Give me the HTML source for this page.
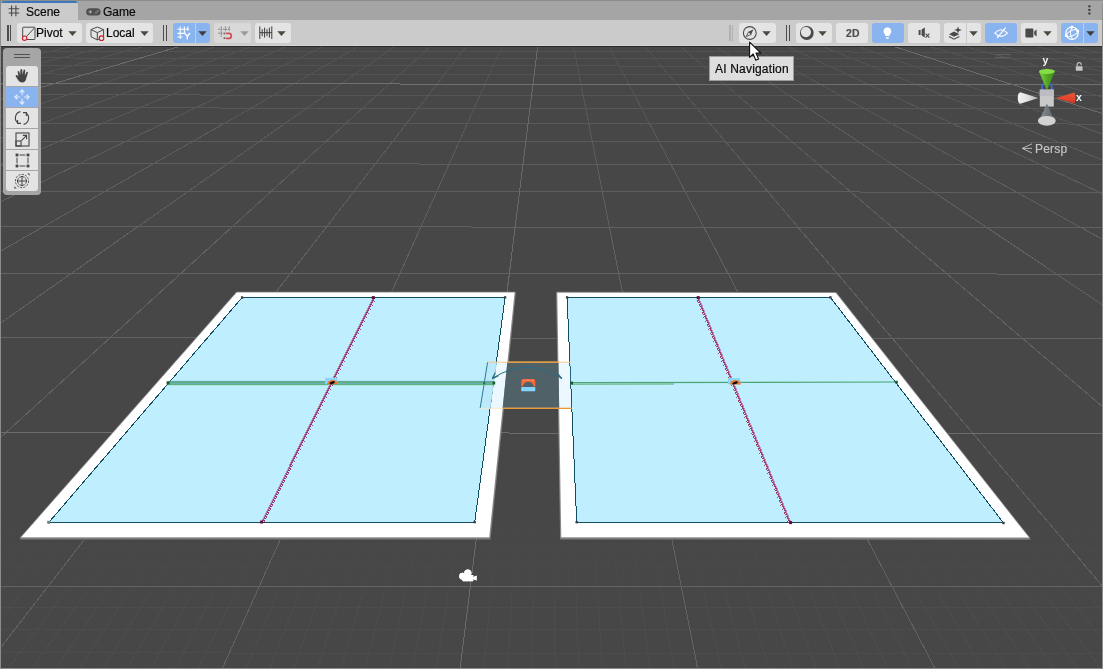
<!DOCTYPE html>
<html><head><meta charset="utf-8"><title>Scene</title>
<style>
html,body{margin:0;padding:0;}
body{width:1103px;height:669px;overflow:hidden;background:#474747;position:relative;font-family:"Liberation Sans",sans-serif;font-size:12px;color:#090909;-webkit-text-stroke-width:0.2px;}
#scene{position:absolute;left:0;top:0;}
#tabbar{position:absolute;left:0;top:0;width:1103px;height:20px;background:#a5a5a5;}
#tabbar .top{position:absolute;left:0;top:0;width:1103px;height:1px;background:#8d8d8d;}
#scenetab{position:absolute;left:1px;top:1px;width:77px;height:19px;background:#cbcbcb;border-radius:3px 3px 0 0;overflow:hidden;}
#scenetab .bl{position:absolute;left:0;top:0;width:100%;height:2px;background:#3a79bb;}
.tabtxt{will-change:transform;position:absolute;top:5px;line-height:14px;font-size:12px;}
#toolbar{position:absolute;left:0;top:20px;width:1103px;height:26px;background:#cbcbcb;box-shadow:inset 0 -1px 0 #d4d4d4;}
#tbline{position:absolute;left:0;top:46px;width:1103px;height:1px;background:#2b2b2b;}
.btn{position:absolute;top:3px;height:20px;background:#e4e4e4;border-radius:3px;}
.btn.blue{background:#8ab4f0;}
.btn.dis{background:#d9d9d9;}
.btn.l{border-radius:3px 0 0 3px;}
.btn.r{border-radius:0 3px 3px 0;}
.btn .t{will-change:transform;position:absolute;top:3px;line-height:14px;font-size:12px;}
.hd{position:absolute;top:5px;width:1.4px;height:15.5px;background:#4c4c4c;}
.hd.lt{background:#b0b0b0;}
#lb{position:absolute;left:0;top:0;width:1px;height:669px;background:#8d8d8d;}
#rb{position:absolute;left:1102px;top:3px;width:1px;height:666px;background:#8d8d8d;}
#bb{position:absolute;left:0;top:667.7px;width:1103px;height:1.3px;background:#8d8d8d;}
#tools{position:absolute;left:3px;top:48px;width:38px;height:146.5px;background:#a6a6a6;border-radius:4px;}
.tb{position:absolute;left:3px;width:32px;height:20px;background:#e4e4e4;}
#tip{position:absolute;left:709px;top:56px;width:83px;height:23px;background:#dedede;border:1px solid #9c9c9c;}
#tip span{position:absolute;left:4.6px;top:5.4px;will-change:transform;font-size:12px;line-height:14px;letter-spacing:0.19px;white-space:nowrap;color:#0a0a0a;}
#persp{will-change:transform;position:absolute;left:1035.4px;top:141.6px;font-size:12px;line-height:14px;color:#c4c4c4;letter-spacing:0.2px;}
svg{display:block;}
.abs{position:absolute;}
</style></head><body>
<svg id="scene" width="1103" height="669" viewBox="0 0 1103 669">
<g shape-rendering="crispEdges" stroke-width="1"><line x1="0" y1="678.2" x2="1103" y2="678.7" stroke="#fff" stroke-opacity="0.027"/><line x1="0" y1="652.9" x2="1103" y2="653.4" stroke="#fff" stroke-opacity="0.027"/><line x1="0" y1="629.3" x2="1103" y2="629.8" stroke="#fff" stroke-opacity="0.027"/><line x1="0" y1="607.1" x2="1103" y2="607.7" stroke="#fff" stroke-opacity="0.026"/><line x1="0" y1="566.8" x2="1103" y2="567.4" stroke="#fff" stroke-opacity="0.016"/><line x1="0" y1="548.5" x2="1103" y2="549.1" stroke="#fff" stroke-opacity="0.011"/><line x1="0" y1="531.1" x2="1103" y2="531.7" stroke="#fff" stroke-opacity="0.007"/><line x1="0" y1="514.7" x2="1103" y2="515.4" stroke="#fff" stroke-opacity="0.003"/><line x1="-1170.4" y1="506.2" x2="-1296.0" y2="547.8" stroke="#fff" stroke-opacity="0.008"/><line x1="-1296.0" y1="547.8" x2="-1441.3" y2="595.9" stroke="#fff" stroke-opacity="0.017"/><line x1="-1441.3" y1="595.9" x2="-2056.8" y2="799.5" stroke="#fff" stroke-opacity="0.026"/><line x1="-1151.9" y1="506.2" x2="-1276.1" y2="547.8" stroke="#fff" stroke-opacity="0.008"/><line x1="-1276.1" y1="547.8" x2="-1419.8" y2="595.9" stroke="#fff" stroke-opacity="0.017"/><line x1="-1419.8" y1="595.9" x2="-2028.6" y2="799.5" stroke="#fff" stroke-opacity="0.026"/><line x1="-1133.3" y1="506.2" x2="-1256.1" y2="547.8" stroke="#fff" stroke-opacity="0.008"/><line x1="-1256.1" y1="547.8" x2="-1398.3" y2="595.9" stroke="#fff" stroke-opacity="0.017"/><line x1="-1398.3" y1="595.9" x2="-2000.5" y2="799.5" stroke="#fff" stroke-opacity="0.026"/><line x1="-1114.7" y1="506.3" x2="-1236.2" y2="547.8" stroke="#fff" stroke-opacity="0.008"/><line x1="-1236.2" y1="547.8" x2="-1376.8" y2="595.9" stroke="#fff" stroke-opacity="0.017"/><line x1="-1376.8" y1="595.9" x2="-1972.3" y2="799.5" stroke="#fff" stroke-opacity="0.026"/><line x1="-1096.2" y1="506.3" x2="-1216.3" y2="547.8" stroke="#fff" stroke-opacity="0.008"/><line x1="-1216.3" y1="547.8" x2="-1355.3" y2="595.9" stroke="#fff" stroke-opacity="0.017"/><line x1="-1355.3" y1="595.9" x2="-1944.2" y2="799.5" stroke="#fff" stroke-opacity="0.026"/><line x1="-1077.6" y1="506.3" x2="-1196.4" y2="547.8" stroke="#fff" stroke-opacity="0.008"/><line x1="-1196.4" y1="547.8" x2="-1333.8" y2="595.9" stroke="#fff" stroke-opacity="0.017"/><line x1="-1333.8" y1="595.9" x2="-1916.1" y2="799.6" stroke="#fff" stroke-opacity="0.026"/><line x1="-1059.0" y1="506.3" x2="-1176.5" y2="547.8" stroke="#fff" stroke-opacity="0.008"/><line x1="-1176.5" y1="547.8" x2="-1312.4" y2="595.9" stroke="#fff" stroke-opacity="0.017"/><line x1="-1312.4" y1="595.9" x2="-1887.9" y2="799.6" stroke="#fff" stroke-opacity="0.026"/><line x1="-1040.5" y1="506.3" x2="-1156.5" y2="547.8" stroke="#fff" stroke-opacity="0.008"/><line x1="-1156.5" y1="547.8" x2="-1290.9" y2="595.9" stroke="#fff" stroke-opacity="0.017"/><line x1="-1290.9" y1="595.9" x2="-1859.8" y2="799.6" stroke="#fff" stroke-opacity="0.026"/><line x1="-1021.9" y1="506.3" x2="-1136.6" y2="547.9" stroke="#fff" stroke-opacity="0.008"/><line x1="-1136.6" y1="547.9" x2="-1269.4" y2="595.9" stroke="#fff" stroke-opacity="0.017"/><line x1="-1269.4" y1="595.9" x2="-1831.7" y2="799.6" stroke="#fff" stroke-opacity="0.026"/><line x1="-984.8" y1="506.3" x2="-1096.8" y2="547.9" stroke="#fff" stroke-opacity="0.008"/><line x1="-1096.8" y1="547.9" x2="-1226.4" y2="596.0" stroke="#fff" stroke-opacity="0.017"/><line x1="-1226.4" y1="596.0" x2="-1775.4" y2="799.6" stroke="#fff" stroke-opacity="0.026"/><line x1="-966.2" y1="506.3" x2="-1076.9" y2="547.9" stroke="#fff" stroke-opacity="0.008"/><line x1="-1076.9" y1="547.9" x2="-1204.9" y2="596.0" stroke="#fff" stroke-opacity="0.017"/><line x1="-1204.9" y1="596.0" x2="-1747.3" y2="799.6" stroke="#fff" stroke-opacity="0.026"/><line x1="-947.6" y1="506.3" x2="-1056.9" y2="547.9" stroke="#fff" stroke-opacity="0.008"/><line x1="-1056.9" y1="547.9" x2="-1183.4" y2="596.0" stroke="#fff" stroke-opacity="0.017"/><line x1="-1183.4" y1="596.0" x2="-1719.1" y2="799.6" stroke="#fff" stroke-opacity="0.026"/><line x1="-929.1" y1="506.4" x2="-1037.0" y2="547.9" stroke="#fff" stroke-opacity="0.008"/><line x1="-1037.0" y1="547.9" x2="-1162.0" y2="596.0" stroke="#fff" stroke-opacity="0.017"/><line x1="-1162.0" y1="596.0" x2="-1691.0" y2="799.6" stroke="#fff" stroke-opacity="0.026"/><line x1="-910.5" y1="506.4" x2="-1017.1" y2="547.9" stroke="#fff" stroke-opacity="0.008"/><line x1="-1017.1" y1="547.9" x2="-1140.5" y2="596.0" stroke="#fff" stroke-opacity="0.017"/><line x1="-1140.5" y1="596.0" x2="-1662.9" y2="799.6" stroke="#fff" stroke-opacity="0.026"/><line x1="-892.0" y1="506.4" x2="-997.2" y2="547.9" stroke="#fff" stroke-opacity="0.008"/><line x1="-997.2" y1="547.9" x2="-1119.0" y2="596.0" stroke="#fff" stroke-opacity="0.017"/><line x1="-1119.0" y1="596.0" x2="-1634.8" y2="799.7" stroke="#fff" stroke-opacity="0.026"/><line x1="-873.4" y1="506.4" x2="-977.3" y2="547.9" stroke="#fff" stroke-opacity="0.008"/><line x1="-977.3" y1="547.9" x2="-1097.5" y2="596.0" stroke="#fff" stroke-opacity="0.017"/><line x1="-1097.5" y1="596.0" x2="-1606.6" y2="799.7" stroke="#fff" stroke-opacity="0.026"/><line x1="-854.8" y1="506.4" x2="-957.4" y2="547.9" stroke="#fff" stroke-opacity="0.008"/><line x1="-957.4" y1="547.9" x2="-1076.0" y2="596.0" stroke="#fff" stroke-opacity="0.017"/><line x1="-1076.0" y1="596.0" x2="-1578.5" y2="799.7" stroke="#fff" stroke-opacity="0.026"/><line x1="-836.3" y1="506.4" x2="-937.5" y2="548.0" stroke="#fff" stroke-opacity="0.008"/><line x1="-937.5" y1="548.0" x2="-1054.5" y2="596.0" stroke="#fff" stroke-opacity="0.017"/><line x1="-1054.5" y1="596.0" x2="-1550.4" y2="799.7" stroke="#fff" stroke-opacity="0.026"/><line x1="-799.2" y1="506.4" x2="-897.6" y2="548.0" stroke="#fff" stroke-opacity="0.008"/><line x1="-897.6" y1="548.0" x2="-1011.6" y2="596.1" stroke="#fff" stroke-opacity="0.017"/><line x1="-1011.6" y1="596.1" x2="-1494.1" y2="799.7" stroke="#fff" stroke-opacity="0.026"/><line x1="-780.6" y1="506.4" x2="-877.7" y2="548.0" stroke="#fff" stroke-opacity="0.008"/><line x1="-877.7" y1="548.0" x2="-990.1" y2="596.1" stroke="#fff" stroke-opacity="0.017"/><line x1="-990.1" y1="596.1" x2="-1466.0" y2="799.7" stroke="#fff" stroke-opacity="0.026"/><line x1="-762.1" y1="506.5" x2="-857.8" y2="548.0" stroke="#fff" stroke-opacity="0.008"/><line x1="-857.8" y1="548.0" x2="-968.6" y2="596.1" stroke="#fff" stroke-opacity="0.017"/><line x1="-968.6" y1="596.1" x2="-1437.9" y2="799.7" stroke="#fff" stroke-opacity="0.026"/><line x1="-743.5" y1="506.5" x2="-837.9" y2="548.0" stroke="#fff" stroke-opacity="0.008"/><line x1="-837.9" y1="548.0" x2="-947.1" y2="596.1" stroke="#fff" stroke-opacity="0.017"/><line x1="-947.1" y1="596.1" x2="-1409.8" y2="799.7" stroke="#fff" stroke-opacity="0.026"/><line x1="-724.9" y1="506.5" x2="-818.0" y2="548.0" stroke="#fff" stroke-opacity="0.008"/><line x1="-818.0" y1="548.0" x2="-925.7" y2="596.1" stroke="#fff" stroke-opacity="0.017"/><line x1="-925.7" y1="596.1" x2="-1381.7" y2="799.8" stroke="#fff" stroke-opacity="0.026"/><line x1="-706.4" y1="506.5" x2="-798.1" y2="548.0" stroke="#fff" stroke-opacity="0.008"/><line x1="-798.1" y1="548.0" x2="-904.2" y2="596.1" stroke="#fff" stroke-opacity="0.017"/><line x1="-904.2" y1="596.1" x2="-1353.5" y2="799.8" stroke="#fff" stroke-opacity="0.026"/><line x1="-687.8" y1="506.5" x2="-778.2" y2="548.0" stroke="#fff" stroke-opacity="0.008"/><line x1="-778.2" y1="548.0" x2="-882.7" y2="596.1" stroke="#fff" stroke-opacity="0.017"/><line x1="-882.7" y1="596.1" x2="-1325.4" y2="799.8" stroke="#fff" stroke-opacity="0.026"/><line x1="-669.3" y1="506.5" x2="-758.3" y2="548.1" stroke="#fff" stroke-opacity="0.008"/><line x1="-758.3" y1="548.1" x2="-861.2" y2="596.1" stroke="#fff" stroke-opacity="0.017"/><line x1="-861.2" y1="596.1" x2="-1297.3" y2="799.8" stroke="#fff" stroke-opacity="0.026"/><line x1="-650.7" y1="506.5" x2="-738.3" y2="548.1" stroke="#fff" stroke-opacity="0.008"/><line x1="-738.3" y1="548.1" x2="-839.8" y2="596.2" stroke="#fff" stroke-opacity="0.017"/><line x1="-839.8" y1="596.2" x2="-1269.2" y2="799.8" stroke="#fff" stroke-opacity="0.026"/><line x1="-613.6" y1="506.5" x2="-698.5" y2="548.1" stroke="#fff" stroke-opacity="0.008"/><line x1="-698.5" y1="548.1" x2="-796.8" y2="596.2" stroke="#fff" stroke-opacity="0.017"/><line x1="-796.8" y1="596.2" x2="-1213.0" y2="799.8" stroke="#fff" stroke-opacity="0.026"/><line x1="-595.1" y1="506.5" x2="-678.6" y2="548.1" stroke="#fff" stroke-opacity="0.008"/><line x1="-678.6" y1="548.1" x2="-775.3" y2="596.2" stroke="#fff" stroke-opacity="0.017"/><line x1="-775.3" y1="596.2" x2="-1184.9" y2="799.8" stroke="#fff" stroke-opacity="0.026"/><line x1="-576.5" y1="506.6" x2="-658.7" y2="548.1" stroke="#fff" stroke-opacity="0.008"/><line x1="-658.7" y1="548.1" x2="-753.9" y2="596.2" stroke="#fff" stroke-opacity="0.017"/><line x1="-753.9" y1="596.2" x2="-1156.8" y2="799.8" stroke="#fff" stroke-opacity="0.026"/><line x1="-558.0" y1="506.6" x2="-638.8" y2="548.1" stroke="#fff" stroke-opacity="0.008"/><line x1="-638.8" y1="548.1" x2="-732.4" y2="596.2" stroke="#fff" stroke-opacity="0.017"/><line x1="-732.4" y1="596.2" x2="-1128.7" y2="799.8" stroke="#fff" stroke-opacity="0.026"/><line x1="-539.4" y1="506.6" x2="-618.9" y2="548.1" stroke="#fff" stroke-opacity="0.008"/><line x1="-618.9" y1="548.1" x2="-710.9" y2="596.2" stroke="#fff" stroke-opacity="0.017"/><line x1="-710.9" y1="596.2" x2="-1100.6" y2="799.9" stroke="#fff" stroke-opacity="0.026"/><line x1="-520.8" y1="506.6" x2="-599.0" y2="548.1" stroke="#fff" stroke-opacity="0.008"/><line x1="-599.0" y1="548.1" x2="-689.5" y2="596.2" stroke="#fff" stroke-opacity="0.017"/><line x1="-689.5" y1="596.2" x2="-1072.4" y2="799.9" stroke="#fff" stroke-opacity="0.026"/><line x1="-502.3" y1="506.6" x2="-579.1" y2="548.2" stroke="#fff" stroke-opacity="0.008"/><line x1="-579.1" y1="548.2" x2="-668.0" y2="596.2" stroke="#fff" stroke-opacity="0.017"/><line x1="-668.0" y1="596.2" x2="-1044.3" y2="799.9" stroke="#fff" stroke-opacity="0.026"/><line x1="-483.7" y1="506.6" x2="-559.2" y2="548.2" stroke="#fff" stroke-opacity="0.008"/><line x1="-559.2" y1="548.2" x2="-646.5" y2="596.3" stroke="#fff" stroke-opacity="0.017"/><line x1="-646.5" y1="596.3" x2="-1016.2" y2="799.9" stroke="#fff" stroke-opacity="0.026"/><line x1="-465.2" y1="506.6" x2="-539.3" y2="548.2" stroke="#fff" stroke-opacity="0.008"/><line x1="-539.3" y1="548.2" x2="-625.0" y2="596.3" stroke="#fff" stroke-opacity="0.017"/><line x1="-625.0" y1="596.3" x2="-988.1" y2="799.9" stroke="#fff" stroke-opacity="0.026"/><line x1="-428.1" y1="506.6" x2="-499.5" y2="548.2" stroke="#fff" stroke-opacity="0.008"/><line x1="-499.5" y1="548.2" x2="-582.1" y2="596.3" stroke="#fff" stroke-opacity="0.017"/><line x1="-582.1" y1="596.3" x2="-931.9" y2="799.9" stroke="#fff" stroke-opacity="0.026"/><line x1="-409.6" y1="506.7" x2="-479.6" y2="548.2" stroke="#fff" stroke-opacity="0.008"/><line x1="-479.6" y1="548.2" x2="-560.6" y2="596.3" stroke="#fff" stroke-opacity="0.017"/><line x1="-560.6" y1="596.3" x2="-903.8" y2="799.9" stroke="#fff" stroke-opacity="0.026"/><line x1="-391.0" y1="506.7" x2="-459.7" y2="548.2" stroke="#fff" stroke-opacity="0.008"/><line x1="-459.7" y1="548.2" x2="-539.2" y2="596.3" stroke="#fff" stroke-opacity="0.017"/><line x1="-539.2" y1="596.3" x2="-875.7" y2="799.9" stroke="#fff" stroke-opacity="0.026"/><line x1="-372.5" y1="506.7" x2="-439.8" y2="548.2" stroke="#fff" stroke-opacity="0.008"/><line x1="-439.8" y1="548.2" x2="-517.7" y2="596.3" stroke="#fff" stroke-opacity="0.017"/><line x1="-517.7" y1="596.3" x2="-847.7" y2="799.9" stroke="#fff" stroke-opacity="0.026"/><line x1="-353.9" y1="506.7" x2="-419.9" y2="548.2" stroke="#fff" stroke-opacity="0.008"/><line x1="-419.9" y1="548.2" x2="-496.2" y2="596.3" stroke="#fff" stroke-opacity="0.017"/><line x1="-496.2" y1="596.3" x2="-819.6" y2="800.0" stroke="#fff" stroke-opacity="0.026"/><line x1="-335.4" y1="506.7" x2="-400.0" y2="548.2" stroke="#fff" stroke-opacity="0.008"/><line x1="-400.0" y1="548.2" x2="-474.8" y2="596.3" stroke="#fff" stroke-opacity="0.017"/><line x1="-474.8" y1="596.3" x2="-791.5" y2="800.0" stroke="#fff" stroke-opacity="0.026"/><line x1="-316.8" y1="506.7" x2="-380.1" y2="548.3" stroke="#fff" stroke-opacity="0.008"/><line x1="-380.1" y1="548.3" x2="-453.3" y2="596.4" stroke="#fff" stroke-opacity="0.017"/><line x1="-453.3" y1="596.4" x2="-763.4" y2="800.0" stroke="#fff" stroke-opacity="0.026"/><line x1="-298.3" y1="506.7" x2="-360.2" y2="548.3" stroke="#fff" stroke-opacity="0.008"/><line x1="-360.2" y1="548.3" x2="-431.9" y2="596.4" stroke="#fff" stroke-opacity="0.017"/><line x1="-431.9" y1="596.4" x2="-735.3" y2="800.0" stroke="#fff" stroke-opacity="0.026"/><line x1="-279.7" y1="506.7" x2="-340.3" y2="548.3" stroke="#fff" stroke-opacity="0.008"/><line x1="-340.3" y1="548.3" x2="-410.4" y2="596.4" stroke="#fff" stroke-opacity="0.017"/><line x1="-410.4" y1="596.4" x2="-707.2" y2="800.0" stroke="#fff" stroke-opacity="0.026"/><line x1="-242.6" y1="506.7" x2="-300.5" y2="548.3" stroke="#fff" stroke-opacity="0.008"/><line x1="-300.5" y1="548.3" x2="-367.5" y2="596.4" stroke="#fff" stroke-opacity="0.017"/><line x1="-367.5" y1="596.4" x2="-651.0" y2="800.0" stroke="#fff" stroke-opacity="0.026"/><line x1="-224.1" y1="506.8" x2="-280.6" y2="548.3" stroke="#fff" stroke-opacity="0.008"/><line x1="-280.6" y1="548.3" x2="-346.0" y2="596.4" stroke="#fff" stroke-opacity="0.017"/><line x1="-346.0" y1="596.4" x2="-622.9" y2="800.0" stroke="#fff" stroke-opacity="0.026"/><line x1="-205.6" y1="506.8" x2="-260.7" y2="548.3" stroke="#fff" stroke-opacity="0.008"/><line x1="-260.7" y1="548.3" x2="-324.6" y2="596.4" stroke="#fff" stroke-opacity="0.017"/><line x1="-324.6" y1="596.4" x2="-594.8" y2="800.0" stroke="#fff" stroke-opacity="0.026"/><line x1="-187.0" y1="506.8" x2="-240.8" y2="548.3" stroke="#fff" stroke-opacity="0.008"/><line x1="-240.8" y1="548.3" x2="-303.1" y2="596.4" stroke="#fff" stroke-opacity="0.017"/><line x1="-303.1" y1="596.4" x2="-566.7" y2="800.0" stroke="#fff" stroke-opacity="0.026"/><line x1="-168.5" y1="506.8" x2="-220.9" y2="548.3" stroke="#fff" stroke-opacity="0.008"/><line x1="-220.9" y1="548.3" x2="-281.6" y2="596.4" stroke="#fff" stroke-opacity="0.017"/><line x1="-281.6" y1="596.4" x2="-538.7" y2="800.1" stroke="#fff" stroke-opacity="0.026"/><line x1="-149.9" y1="506.8" x2="-201.0" y2="548.4" stroke="#fff" stroke-opacity="0.008"/><line x1="-201.0" y1="548.4" x2="-260.2" y2="596.4" stroke="#fff" stroke-opacity="0.017"/><line x1="-260.2" y1="596.4" x2="-510.6" y2="800.1" stroke="#fff" stroke-opacity="0.026"/><line x1="-131.4" y1="506.8" x2="-181.1" y2="548.4" stroke="#fff" stroke-opacity="0.008"/><line x1="-181.1" y1="548.4" x2="-238.7" y2="596.5" stroke="#fff" stroke-opacity="0.017"/><line x1="-238.7" y1="596.5" x2="-482.5" y2="800.1" stroke="#fff" stroke-opacity="0.026"/><line x1="-112.8" y1="506.8" x2="-161.2" y2="548.4" stroke="#fff" stroke-opacity="0.008"/><line x1="-161.2" y1="548.4" x2="-217.3" y2="596.5" stroke="#fff" stroke-opacity="0.017"/><line x1="-217.3" y1="596.5" x2="-454.4" y2="800.1" stroke="#fff" stroke-opacity="0.026"/><line x1="-94.3" y1="506.8" x2="-141.4" y2="548.4" stroke="#fff" stroke-opacity="0.008"/><line x1="-141.4" y1="548.4" x2="-195.8" y2="596.5" stroke="#fff" stroke-opacity="0.017"/><line x1="-195.8" y1="596.5" x2="-426.3" y2="800.1" stroke="#fff" stroke-opacity="0.026"/><line x1="-57.2" y1="506.9" x2="-101.6" y2="548.4" stroke="#fff" stroke-opacity="0.008"/><line x1="-101.6" y1="548.4" x2="-152.9" y2="596.5" stroke="#fff" stroke-opacity="0.017"/><line x1="-152.9" y1="596.5" x2="-370.2" y2="800.1" stroke="#fff" stroke-opacity="0.026"/><line x1="-38.7" y1="506.9" x2="-81.7" y2="548.4" stroke="#fff" stroke-opacity="0.008"/><line x1="-81.7" y1="548.4" x2="-131.4" y2="596.5" stroke="#fff" stroke-opacity="0.017"/><line x1="-131.4" y1="596.5" x2="-342.1" y2="800.1" stroke="#fff" stroke-opacity="0.026"/><line x1="-20.1" y1="506.9" x2="-61.8" y2="548.4" stroke="#fff" stroke-opacity="0.008"/><line x1="-61.8" y1="548.4" x2="-110.0" y2="596.5" stroke="#fff" stroke-opacity="0.017"/><line x1="-110.0" y1="596.5" x2="-314.0" y2="800.1" stroke="#fff" stroke-opacity="0.026"/><line x1="-1.6" y1="506.9" x2="-41.9" y2="548.4" stroke="#fff" stroke-opacity="0.008"/><line x1="-41.9" y1="548.4" x2="-88.5" y2="596.5" stroke="#fff" stroke-opacity="0.017"/><line x1="-88.5" y1="596.5" x2="-286.0" y2="800.2" stroke="#fff" stroke-opacity="0.026"/><line x1="16.9" y1="506.9" x2="-22.0" y2="548.5" stroke="#fff" stroke-opacity="0.008"/><line x1="-22.0" y1="548.5" x2="-67.1" y2="596.5" stroke="#fff" stroke-opacity="0.017"/><line x1="-67.1" y1="596.5" x2="-257.9" y2="800.2" stroke="#fff" stroke-opacity="0.026"/><line x1="35.5" y1="506.9" x2="-2.1" y2="548.5" stroke="#fff" stroke-opacity="0.008"/><line x1="-2.1" y1="548.5" x2="-45.6" y2="596.6" stroke="#fff" stroke-opacity="0.017"/><line x1="-45.6" y1="596.6" x2="-229.8" y2="800.2" stroke="#fff" stroke-opacity="0.026"/><line x1="54.0" y1="506.9" x2="17.8" y2="548.5" stroke="#fff" stroke-opacity="0.008"/><line x1="17.8" y1="548.5" x2="-24.2" y2="596.6" stroke="#fff" stroke-opacity="0.017"/><line x1="-24.2" y1="596.6" x2="-201.7" y2="800.2" stroke="#fff" stroke-opacity="0.026"/><line x1="72.5" y1="506.9" x2="37.6" y2="548.5" stroke="#fff" stroke-opacity="0.008"/><line x1="37.6" y1="548.5" x2="-2.7" y2="596.6" stroke="#fff" stroke-opacity="0.017"/><line x1="-2.7" y1="596.6" x2="-173.7" y2="800.2" stroke="#fff" stroke-opacity="0.026"/><line x1="91.1" y1="506.9" x2="57.5" y2="548.5" stroke="#fff" stroke-opacity="0.008"/><line x1="57.5" y1="548.5" x2="18.7" y2="596.6" stroke="#fff" stroke-opacity="0.017"/><line x1="18.7" y1="596.6" x2="-145.6" y2="800.2" stroke="#fff" stroke-opacity="0.026"/><line x1="128.1" y1="507.0" x2="97.3" y2="548.5" stroke="#fff" stroke-opacity="0.008"/><line x1="97.3" y1="548.5" x2="61.6" y2="596.6" stroke="#fff" stroke-opacity="0.017"/><line x1="61.6" y1="596.6" x2="-89.5" y2="800.2" stroke="#fff" stroke-opacity="0.026"/><line x1="146.7" y1="507.0" x2="117.2" y2="548.5" stroke="#fff" stroke-opacity="0.008"/><line x1="117.2" y1="548.5" x2="83.1" y2="596.6" stroke="#fff" stroke-opacity="0.017"/><line x1="83.1" y1="596.6" x2="-61.4" y2="800.2" stroke="#fff" stroke-opacity="0.026"/><line x1="165.2" y1="507.0" x2="137.1" y2="548.5" stroke="#fff" stroke-opacity="0.008"/><line x1="137.1" y1="548.5" x2="104.5" y2="596.6" stroke="#fff" stroke-opacity="0.017"/><line x1="104.5" y1="596.6" x2="-33.3" y2="800.2" stroke="#fff" stroke-opacity="0.026"/><line x1="183.7" y1="507.0" x2="157.0" y2="548.6" stroke="#fff" stroke-opacity="0.008"/><line x1="157.0" y1="548.6" x2="126.0" y2="596.6" stroke="#fff" stroke-opacity="0.017"/><line x1="126.0" y1="596.6" x2="-5.3" y2="800.3" stroke="#fff" stroke-opacity="0.026"/><line x1="202.3" y1="507.0" x2="176.8" y2="548.6" stroke="#fff" stroke-opacity="0.008"/><line x1="176.8" y1="548.6" x2="147.4" y2="596.7" stroke="#fff" stroke-opacity="0.017"/><line x1="147.4" y1="596.7" x2="22.8" y2="800.3" stroke="#fff" stroke-opacity="0.026"/><line x1="220.8" y1="507.0" x2="196.7" y2="548.6" stroke="#fff" stroke-opacity="0.008"/><line x1="196.7" y1="548.6" x2="168.8" y2="596.7" stroke="#fff" stroke-opacity="0.017"/><line x1="168.8" y1="596.7" x2="50.8" y2="800.3" stroke="#fff" stroke-opacity="0.026"/><line x1="239.3" y1="507.0" x2="216.6" y2="548.6" stroke="#fff" stroke-opacity="0.008"/><line x1="216.6" y1="548.6" x2="190.3" y2="596.7" stroke="#fff" stroke-opacity="0.017"/><line x1="190.3" y1="596.7" x2="78.9" y2="800.3" stroke="#fff" stroke-opacity="0.026"/><line x1="257.9" y1="507.0" x2="236.5" y2="548.6" stroke="#fff" stroke-opacity="0.008"/><line x1="236.5" y1="548.6" x2="211.7" y2="596.7" stroke="#fff" stroke-opacity="0.017"/><line x1="211.7" y1="596.7" x2="107.0" y2="800.3" stroke="#fff" stroke-opacity="0.026"/><line x1="276.4" y1="507.0" x2="256.4" y2="548.6" stroke="#fff" stroke-opacity="0.008"/><line x1="256.4" y1="548.6" x2="233.2" y2="596.7" stroke="#fff" stroke-opacity="0.017"/><line x1="233.2" y1="596.7" x2="135.0" y2="800.3" stroke="#fff" stroke-opacity="0.026"/><line x1="313.5" y1="507.1" x2="296.1" y2="548.6" stroke="#fff" stroke-opacity="0.008"/><line x1="296.1" y1="548.6" x2="276.1" y2="596.7" stroke="#fff" stroke-opacity="0.017"/><line x1="276.1" y1="596.7" x2="191.1" y2="800.3" stroke="#fff" stroke-opacity="0.026"/><line x1="332.0" y1="507.1" x2="316.0" y2="548.6" stroke="#fff" stroke-opacity="0.008"/><line x1="316.0" y1="548.6" x2="297.5" y2="596.7" stroke="#fff" stroke-opacity="0.017"/><line x1="297.5" y1="596.7" x2="219.2" y2="800.3" stroke="#fff" stroke-opacity="0.026"/><line x1="350.5" y1="507.1" x2="335.9" y2="548.6" stroke="#fff" stroke-opacity="0.008"/><line x1="335.9" y1="548.6" x2="318.9" y2="596.7" stroke="#fff" stroke-opacity="0.017"/><line x1="318.9" y1="596.7" x2="247.2" y2="800.3" stroke="#fff" stroke-opacity="0.026"/><line x1="369.0" y1="507.1" x2="355.8" y2="548.7" stroke="#fff" stroke-opacity="0.008"/><line x1="355.8" y1="548.7" x2="340.4" y2="596.8" stroke="#fff" stroke-opacity="0.017"/><line x1="340.4" y1="596.8" x2="275.3" y2="800.4" stroke="#fff" stroke-opacity="0.026"/><line x1="387.6" y1="507.1" x2="375.6" y2="548.7" stroke="#fff" stroke-opacity="0.008"/><line x1="375.6" y1="548.7" x2="361.8" y2="596.8" stroke="#fff" stroke-opacity="0.017"/><line x1="361.8" y1="596.8" x2="303.3" y2="800.4" stroke="#fff" stroke-opacity="0.026"/><line x1="406.1" y1="507.1" x2="395.5" y2="548.7" stroke="#fff" stroke-opacity="0.008"/><line x1="395.5" y1="548.7" x2="383.3" y2="596.8" stroke="#fff" stroke-opacity="0.017"/><line x1="383.3" y1="596.8" x2="331.4" y2="800.4" stroke="#fff" stroke-opacity="0.026"/><line x1="424.6" y1="507.1" x2="415.4" y2="548.7" stroke="#fff" stroke-opacity="0.008"/><line x1="415.4" y1="548.7" x2="404.7" y2="596.8" stroke="#fff" stroke-opacity="0.017"/><line x1="404.7" y1="596.8" x2="359.4" y2="800.4" stroke="#fff" stroke-opacity="0.026"/><line x1="443.2" y1="507.1" x2="435.3" y2="548.7" stroke="#fff" stroke-opacity="0.008"/><line x1="435.3" y1="548.7" x2="426.1" y2="596.8" stroke="#fff" stroke-opacity="0.017"/><line x1="426.1" y1="596.8" x2="387.5" y2="800.4" stroke="#fff" stroke-opacity="0.026"/><line x1="461.7" y1="507.1" x2="455.1" y2="548.7" stroke="#fff" stroke-opacity="0.008"/><line x1="455.1" y1="548.7" x2="447.6" y2="596.8" stroke="#fff" stroke-opacity="0.017"/><line x1="447.6" y1="596.8" x2="415.5" y2="800.4" stroke="#fff" stroke-opacity="0.026"/><line x1="498.7" y1="507.2" x2="494.9" y2="548.7" stroke="#fff" stroke-opacity="0.008"/><line x1="494.9" y1="548.7" x2="490.4" y2="596.8" stroke="#fff" stroke-opacity="0.017"/><line x1="490.4" y1="596.8" x2="471.6" y2="800.4" stroke="#fff" stroke-opacity="0.026"/><line x1="517.3" y1="507.2" x2="514.8" y2="548.7" stroke="#fff" stroke-opacity="0.008"/><line x1="514.8" y1="548.7" x2="511.9" y2="596.8" stroke="#fff" stroke-opacity="0.017"/><line x1="511.9" y1="596.8" x2="499.7" y2="800.4" stroke="#fff" stroke-opacity="0.026"/><line x1="535.8" y1="507.2" x2="534.6" y2="548.8" stroke="#fff" stroke-opacity="0.008"/><line x1="534.6" y1="548.8" x2="533.3" y2="596.9" stroke="#fff" stroke-opacity="0.017"/><line x1="533.3" y1="596.9" x2="527.7" y2="800.4" stroke="#fff" stroke-opacity="0.026"/><line x1="554.3" y1="507.2" x2="554.5" y2="548.8" stroke="#fff" stroke-opacity="0.008"/><line x1="554.5" y1="548.8" x2="554.7" y2="596.9" stroke="#fff" stroke-opacity="0.017"/><line x1="554.7" y1="596.9" x2="555.8" y2="800.5" stroke="#fff" stroke-opacity="0.026"/><line x1="572.8" y1="507.2" x2="574.4" y2="548.8" stroke="#fff" stroke-opacity="0.008"/><line x1="574.4" y1="548.8" x2="576.2" y2="596.9" stroke="#fff" stroke-opacity="0.017"/><line x1="576.2" y1="596.9" x2="583.8" y2="800.5" stroke="#fff" stroke-opacity="0.026"/><line x1="591.3" y1="507.2" x2="594.2" y2="548.8" stroke="#fff" stroke-opacity="0.008"/><line x1="594.2" y1="548.8" x2="597.6" y2="596.9" stroke="#fff" stroke-opacity="0.017"/><line x1="597.6" y1="596.9" x2="611.8" y2="800.5" stroke="#fff" stroke-opacity="0.026"/><line x1="609.9" y1="507.2" x2="614.1" y2="548.8" stroke="#fff" stroke-opacity="0.008"/><line x1="614.1" y1="548.8" x2="619.0" y2="596.9" stroke="#fff" stroke-opacity="0.017"/><line x1="619.0" y1="596.9" x2="639.9" y2="800.5" stroke="#fff" stroke-opacity="0.026"/><line x1="628.4" y1="507.2" x2="634.0" y2="548.8" stroke="#fff" stroke-opacity="0.008"/><line x1="634.0" y1="548.8" x2="640.5" y2="596.9" stroke="#fff" stroke-opacity="0.017"/><line x1="640.5" y1="596.9" x2="667.9" y2="800.5" stroke="#fff" stroke-opacity="0.026"/><line x1="646.9" y1="507.3" x2="653.9" y2="548.8" stroke="#fff" stroke-opacity="0.008"/><line x1="653.9" y1="548.8" x2="661.9" y2="596.9" stroke="#fff" stroke-opacity="0.017"/><line x1="661.9" y1="596.9" x2="696.0" y2="800.5" stroke="#fff" stroke-opacity="0.026"/><line x1="684.0" y1="507.3" x2="693.6" y2="548.8" stroke="#fff" stroke-opacity="0.008"/><line x1="693.6" y1="548.8" x2="704.8" y2="596.9" stroke="#fff" stroke-opacity="0.017"/><line x1="704.8" y1="596.9" x2="752.0" y2="800.5" stroke="#fff" stroke-opacity="0.026"/><line x1="702.5" y1="507.3" x2="713.5" y2="548.9" stroke="#fff" stroke-opacity="0.008"/><line x1="713.5" y1="548.9" x2="726.2" y2="596.9" stroke="#fff" stroke-opacity="0.017"/><line x1="726.2" y1="596.9" x2="780.1" y2="800.5" stroke="#fff" stroke-opacity="0.026"/><line x1="721.0" y1="507.3" x2="733.3" y2="548.9" stroke="#fff" stroke-opacity="0.008"/><line x1="733.3" y1="548.9" x2="747.6" y2="597.0" stroke="#fff" stroke-opacity="0.017"/><line x1="747.6" y1="597.0" x2="808.1" y2="800.6" stroke="#fff" stroke-opacity="0.026"/><line x1="739.5" y1="507.3" x2="753.2" y2="548.9" stroke="#fff" stroke-opacity="0.008"/><line x1="753.2" y1="548.9" x2="769.0" y2="597.0" stroke="#fff" stroke-opacity="0.017"/><line x1="769.0" y1="597.0" x2="836.1" y2="800.6" stroke="#fff" stroke-opacity="0.026"/><line x1="758.0" y1="507.3" x2="773.1" y2="548.9" stroke="#fff" stroke-opacity="0.008"/><line x1="773.1" y1="548.9" x2="790.5" y2="597.0" stroke="#fff" stroke-opacity="0.017"/><line x1="790.5" y1="597.0" x2="864.1" y2="800.6" stroke="#fff" stroke-opacity="0.026"/><line x1="776.5" y1="507.3" x2="792.9" y2="548.9" stroke="#fff" stroke-opacity="0.008"/><line x1="792.9" y1="548.9" x2="811.9" y2="597.0" stroke="#fff" stroke-opacity="0.017"/><line x1="811.9" y1="597.0" x2="892.2" y2="800.6" stroke="#fff" stroke-opacity="0.026"/><line x1="795.1" y1="507.3" x2="812.8" y2="548.9" stroke="#fff" stroke-opacity="0.008"/><line x1="812.8" y1="548.9" x2="833.3" y2="597.0" stroke="#fff" stroke-opacity="0.017"/><line x1="833.3" y1="597.0" x2="920.2" y2="800.6" stroke="#fff" stroke-opacity="0.026"/><line x1="813.6" y1="507.3" x2="832.7" y2="548.9" stroke="#fff" stroke-opacity="0.008"/><line x1="832.7" y1="548.9" x2="854.7" y2="597.0" stroke="#fff" stroke-opacity="0.017"/><line x1="854.7" y1="597.0" x2="948.2" y2="800.6" stroke="#fff" stroke-opacity="0.026"/><line x1="832.1" y1="507.4" x2="852.5" y2="548.9" stroke="#fff" stroke-opacity="0.008"/><line x1="852.5" y1="548.9" x2="876.2" y2="597.0" stroke="#fff" stroke-opacity="0.017"/><line x1="876.2" y1="597.0" x2="976.3" y2="800.6" stroke="#fff" stroke-opacity="0.026"/><line x1="869.1" y1="507.4" x2="892.3" y2="548.9" stroke="#fff" stroke-opacity="0.008"/><line x1="892.3" y1="548.9" x2="919.0" y2="597.0" stroke="#fff" stroke-opacity="0.017"/><line x1="919.0" y1="597.0" x2="1032.3" y2="800.6" stroke="#fff" stroke-opacity="0.026"/><line x1="887.6" y1="507.4" x2="912.1" y2="549.0" stroke="#fff" stroke-opacity="0.008"/><line x1="912.1" y1="549.0" x2="940.4" y2="597.1" stroke="#fff" stroke-opacity="0.017"/><line x1="940.4" y1="597.1" x2="1060.3" y2="800.6" stroke="#fff" stroke-opacity="0.026"/><line x1="906.2" y1="507.4" x2="932.0" y2="549.0" stroke="#fff" stroke-opacity="0.008"/><line x1="932.0" y1="549.0" x2="961.9" y2="597.1" stroke="#fff" stroke-opacity="0.017"/><line x1="961.9" y1="597.1" x2="1088.3" y2="800.7" stroke="#fff" stroke-opacity="0.026"/><line x1="924.7" y1="507.4" x2="951.8" y2="549.0" stroke="#fff" stroke-opacity="0.008"/><line x1="951.8" y1="549.0" x2="983.3" y2="597.1" stroke="#fff" stroke-opacity="0.017"/><line x1="983.3" y1="597.1" x2="1116.4" y2="800.7" stroke="#fff" stroke-opacity="0.026"/><line x1="943.2" y1="507.4" x2="971.7" y2="549.0" stroke="#fff" stroke-opacity="0.008"/><line x1="971.7" y1="549.0" x2="1004.7" y2="597.1" stroke="#fff" stroke-opacity="0.017"/><line x1="1004.7" y1="597.1" x2="1144.4" y2="800.7" stroke="#fff" stroke-opacity="0.026"/><line x1="961.7" y1="507.4" x2="991.6" y2="549.0" stroke="#fff" stroke-opacity="0.008"/><line x1="991.6" y1="549.0" x2="1026.1" y2="597.1" stroke="#fff" stroke-opacity="0.017"/><line x1="1026.1" y1="597.1" x2="1172.4" y2="800.7" stroke="#fff" stroke-opacity="0.026"/><line x1="980.2" y1="507.4" x2="1011.4" y2="549.0" stroke="#fff" stroke-opacity="0.008"/><line x1="1011.4" y1="549.0" x2="1047.5" y2="597.1" stroke="#fff" stroke-opacity="0.017"/><line x1="1047.5" y1="597.1" x2="1200.4" y2="800.7" stroke="#fff" stroke-opacity="0.026"/><line x1="998.7" y1="507.5" x2="1031.3" y2="549.0" stroke="#fff" stroke-opacity="0.008"/><line x1="1031.3" y1="549.0" x2="1069.0" y2="597.1" stroke="#fff" stroke-opacity="0.017"/><line x1="1069.0" y1="597.1" x2="1228.4" y2="800.7" stroke="#fff" stroke-opacity="0.026"/><line x1="1017.2" y1="507.5" x2="1051.1" y2="549.0" stroke="#fff" stroke-opacity="0.008"/><line x1="1051.1" y1="549.0" x2="1090.4" y2="597.1" stroke="#fff" stroke-opacity="0.017"/><line x1="1090.4" y1="597.1" x2="1256.4" y2="800.7" stroke="#fff" stroke-opacity="0.026"/><line x1="1054.3" y1="507.5" x2="1090.9" y2="549.1" stroke="#fff" stroke-opacity="0.008"/><line x1="1090.9" y1="549.1" x2="1133.2" y2="597.2" stroke="#fff" stroke-opacity="0.017"/><line x1="1133.2" y1="597.2" x2="1312.5" y2="800.7" stroke="#fff" stroke-opacity="0.026"/><line x1="1072.8" y1="507.5" x2="1110.7" y2="549.1" stroke="#fff" stroke-opacity="0.008"/><line x1="1110.7" y1="549.1" x2="1154.6" y2="597.2" stroke="#fff" stroke-opacity="0.017"/><line x1="1154.6" y1="597.2" x2="1340.5" y2="800.7" stroke="#fff" stroke-opacity="0.026"/><line x1="1091.3" y1="507.5" x2="1130.6" y2="549.1" stroke="#fff" stroke-opacity="0.008"/><line x1="1130.6" y1="549.1" x2="1176.0" y2="597.2" stroke="#fff" stroke-opacity="0.017"/><line x1="1176.0" y1="597.2" x2="1368.5" y2="800.8" stroke="#fff" stroke-opacity="0.026"/><line x1="1109.8" y1="507.5" x2="1150.4" y2="549.1" stroke="#fff" stroke-opacity="0.008"/><line x1="1150.4" y1="549.1" x2="1197.5" y2="597.2" stroke="#fff" stroke-opacity="0.017"/><line x1="1197.5" y1="597.2" x2="1396.5" y2="800.8" stroke="#fff" stroke-opacity="0.026"/><line x1="1128.3" y1="507.5" x2="1170.3" y2="549.1" stroke="#fff" stroke-opacity="0.008"/><line x1="1170.3" y1="549.1" x2="1218.9" y2="597.2" stroke="#fff" stroke-opacity="0.017"/><line x1="1218.9" y1="597.2" x2="1424.5" y2="800.8" stroke="#fff" stroke-opacity="0.026"/><line x1="1146.8" y1="507.5" x2="1190.1" y2="549.1" stroke="#fff" stroke-opacity="0.008"/><line x1="1190.1" y1="549.1" x2="1240.3" y2="597.2" stroke="#fff" stroke-opacity="0.017"/><line x1="1240.3" y1="597.2" x2="1452.5" y2="800.8" stroke="#fff" stroke-opacity="0.026"/><line x1="1165.3" y1="507.5" x2="1210.0" y2="549.1" stroke="#fff" stroke-opacity="0.008"/><line x1="1210.0" y1="549.1" x2="1261.7" y2="597.2" stroke="#fff" stroke-opacity="0.017"/><line x1="1261.7" y1="597.2" x2="1480.5" y2="800.8" stroke="#fff" stroke-opacity="0.026"/><line x1="1183.8" y1="507.6" x2="1229.8" y2="549.1" stroke="#fff" stroke-opacity="0.008"/><line x1="1229.8" y1="549.1" x2="1283.1" y2="597.2" stroke="#fff" stroke-opacity="0.017"/><line x1="1283.1" y1="597.2" x2="1508.5" y2="800.8" stroke="#fff" stroke-opacity="0.026"/><line x1="1202.3" y1="507.6" x2="1249.7" y2="549.1" stroke="#fff" stroke-opacity="0.008"/><line x1="1249.7" y1="549.1" x2="1304.5" y2="597.2" stroke="#fff" stroke-opacity="0.017"/><line x1="1304.5" y1="597.2" x2="1536.5" y2="800.8" stroke="#fff" stroke-opacity="0.026"/><line x1="1239.3" y1="507.6" x2="1289.4" y2="549.2" stroke="#fff" stroke-opacity="0.008"/><line x1="1289.4" y1="549.2" x2="1347.3" y2="597.3" stroke="#fff" stroke-opacity="0.017"/><line x1="1347.3" y1="597.3" x2="1592.5" y2="800.8" stroke="#fff" stroke-opacity="0.026"/><line x1="1257.8" y1="507.6" x2="1309.3" y2="549.2" stroke="#fff" stroke-opacity="0.008"/><line x1="1309.3" y1="549.2" x2="1368.7" y2="597.3" stroke="#fff" stroke-opacity="0.017"/><line x1="1368.7" y1="597.3" x2="1620.5" y2="800.8" stroke="#fff" stroke-opacity="0.026"/><line x1="1276.3" y1="507.6" x2="1329.1" y2="549.2" stroke="#fff" stroke-opacity="0.008"/><line x1="1329.1" y1="549.2" x2="1390.2" y2="597.3" stroke="#fff" stroke-opacity="0.017"/><line x1="1390.2" y1="597.3" x2="1648.5" y2="800.9" stroke="#fff" stroke-opacity="0.026"/><line x1="1294.8" y1="507.6" x2="1349.0" y2="549.2" stroke="#fff" stroke-opacity="0.008"/><line x1="1349.0" y1="549.2" x2="1411.6" y2="597.3" stroke="#fff" stroke-opacity="0.017"/><line x1="1411.6" y1="597.3" x2="1676.5" y2="800.9" stroke="#fff" stroke-opacity="0.026"/><line x1="1313.4" y1="507.6" x2="1368.8" y2="549.2" stroke="#fff" stroke-opacity="0.008"/><line x1="1368.8" y1="549.2" x2="1433.0" y2="597.3" stroke="#fff" stroke-opacity="0.017"/><line x1="1433.0" y1="597.3" x2="1704.5" y2="800.9" stroke="#fff" stroke-opacity="0.026"/><line x1="1331.9" y1="507.6" x2="1388.7" y2="549.2" stroke="#fff" stroke-opacity="0.008"/><line x1="1388.7" y1="549.2" x2="1454.4" y2="597.3" stroke="#fff" stroke-opacity="0.017"/><line x1="1454.4" y1="597.3" x2="1732.5" y2="800.9" stroke="#fff" stroke-opacity="0.026"/><line x1="1350.4" y1="507.7" x2="1408.5" y2="549.2" stroke="#fff" stroke-opacity="0.008"/><line x1="1408.5" y1="549.2" x2="1475.8" y2="597.3" stroke="#fff" stroke-opacity="0.017"/><line x1="1475.8" y1="597.3" x2="1760.5" y2="800.9" stroke="#fff" stroke-opacity="0.026"/><line x1="1368.9" y1="507.7" x2="1428.4" y2="549.2" stroke="#fff" stroke-opacity="0.008"/><line x1="1428.4" y1="549.2" x2="1497.2" y2="597.3" stroke="#fff" stroke-opacity="0.017"/><line x1="1497.2" y1="597.3" x2="1788.5" y2="800.9" stroke="#fff" stroke-opacity="0.026"/><line x1="1387.4" y1="507.7" x2="1448.2" y2="549.2" stroke="#fff" stroke-opacity="0.008"/><line x1="1448.2" y1="549.2" x2="1518.6" y2="597.3" stroke="#fff" stroke-opacity="0.017"/><line x1="1518.6" y1="597.3" x2="1816.5" y2="800.9" stroke="#fff" stroke-opacity="0.026"/><line x1="1424.4" y1="507.7" x2="1487.9" y2="549.3" stroke="#fff" stroke-opacity="0.008"/><line x1="1487.9" y1="549.3" x2="1561.4" y2="597.4" stroke="#fff" stroke-opacity="0.017"/><line x1="1561.4" y1="597.4" x2="1872.5" y2="800.9" stroke="#fff" stroke-opacity="0.026"/><line x1="1442.9" y1="507.7" x2="1507.7" y2="549.3" stroke="#fff" stroke-opacity="0.008"/><line x1="1507.7" y1="549.3" x2="1582.8" y2="597.4" stroke="#fff" stroke-opacity="0.017"/><line x1="1582.8" y1="597.4" x2="1900.5" y2="801.0" stroke="#fff" stroke-opacity="0.026"/><line x1="1461.4" y1="507.7" x2="1527.6" y2="549.3" stroke="#fff" stroke-opacity="0.008"/><line x1="1527.6" y1="549.3" x2="1604.2" y2="597.4" stroke="#fff" stroke-opacity="0.017"/><line x1="1604.2" y1="597.4" x2="1928.5" y2="801.0" stroke="#fff" stroke-opacity="0.026"/><line x1="1479.9" y1="507.7" x2="1547.4" y2="549.3" stroke="#fff" stroke-opacity="0.008"/><line x1="1547.4" y1="549.3" x2="1625.6" y2="597.4" stroke="#fff" stroke-opacity="0.017"/><line x1="1625.6" y1="597.4" x2="1956.4" y2="801.0" stroke="#fff" stroke-opacity="0.026"/><line x1="1498.4" y1="507.7" x2="1567.3" y2="549.3" stroke="#fff" stroke-opacity="0.008"/><line x1="1567.3" y1="549.3" x2="1647.0" y2="597.4" stroke="#fff" stroke-opacity="0.017"/><line x1="1647.0" y1="597.4" x2="1984.4" y2="801.0" stroke="#fff" stroke-opacity="0.026"/><line x1="1516.9" y1="507.7" x2="1587.1" y2="549.3" stroke="#fff" stroke-opacity="0.008"/><line x1="1587.1" y1="549.3" x2="1668.4" y2="597.4" stroke="#fff" stroke-opacity="0.017"/><line x1="1668.4" y1="597.4" x2="2012.4" y2="801.0" stroke="#fff" stroke-opacity="0.026"/><line x1="1535.4" y1="507.8" x2="1607.0" y2="549.3" stroke="#fff" stroke-opacity="0.008"/><line x1="1607.0" y1="549.3" x2="1689.8" y2="597.4" stroke="#fff" stroke-opacity="0.017"/><line x1="1689.8" y1="597.4" x2="2040.4" y2="801.0" stroke="#fff" stroke-opacity="0.026"/><line x1="1553.9" y1="507.8" x2="1626.8" y2="549.3" stroke="#fff" stroke-opacity="0.008"/><line x1="1626.8" y1="549.3" x2="1711.2" y2="597.4" stroke="#fff" stroke-opacity="0.017"/><line x1="1711.2" y1="597.4" x2="2068.4" y2="801.0" stroke="#fff" stroke-opacity="0.026"/><line x1="1572.4" y1="507.8" x2="1646.7" y2="549.4" stroke="#fff" stroke-opacity="0.008"/><line x1="1646.7" y1="549.4" x2="1732.6" y2="597.5" stroke="#fff" stroke-opacity="0.017"/><line x1="1732.6" y1="597.5" x2="2096.4" y2="801.0" stroke="#fff" stroke-opacity="0.026"/><line x1="1609.3" y1="507.8" x2="1686.3" y2="549.4" stroke="#fff" stroke-opacity="0.008"/><line x1="1686.3" y1="549.4" x2="1775.4" y2="597.5" stroke="#fff" stroke-opacity="0.017"/><line x1="1775.4" y1="597.5" x2="2152.3" y2="801.0" stroke="#fff" stroke-opacity="0.026"/><line x1="1627.8" y1="507.8" x2="1706.2" y2="549.4" stroke="#fff" stroke-opacity="0.008"/><line x1="1706.2" y1="549.4" x2="1796.8" y2="597.5" stroke="#fff" stroke-opacity="0.017"/><line x1="1796.8" y1="597.5" x2="2180.3" y2="801.1" stroke="#fff" stroke-opacity="0.026"/><line x1="1646.3" y1="507.8" x2="1726.0" y2="549.4" stroke="#fff" stroke-opacity="0.008"/><line x1="1726.0" y1="549.4" x2="1818.2" y2="597.5" stroke="#fff" stroke-opacity="0.017"/><line x1="1818.2" y1="597.5" x2="2208.3" y2="801.1" stroke="#fff" stroke-opacity="0.026"/><line x1="1664.8" y1="507.8" x2="1745.9" y2="549.4" stroke="#fff" stroke-opacity="0.008"/><line x1="1745.9" y1="549.4" x2="1839.6" y2="597.5" stroke="#fff" stroke-opacity="0.017"/><line x1="1839.6" y1="597.5" x2="2236.2" y2="801.1" stroke="#fff" stroke-opacity="0.026"/><line x1="1683.3" y1="507.8" x2="1765.7" y2="549.4" stroke="#fff" stroke-opacity="0.008"/><line x1="1765.7" y1="549.4" x2="1861.0" y2="597.5" stroke="#fff" stroke-opacity="0.017"/><line x1="1861.0" y1="597.5" x2="2264.2" y2="801.1" stroke="#fff" stroke-opacity="0.026"/><line x1="1701.8" y1="507.9" x2="1785.5" y2="549.4" stroke="#fff" stroke-opacity="0.008"/><line x1="1785.5" y1="549.4" x2="1882.4" y2="597.5" stroke="#fff" stroke-opacity="0.017"/><line x1="1882.4" y1="597.5" x2="2292.2" y2="801.1" stroke="#fff" stroke-opacity="0.026"/><line x1="1720.3" y1="507.9" x2="1805.4" y2="549.4" stroke="#fff" stroke-opacity="0.008"/><line x1="1805.4" y1="549.4" x2="1903.8" y2="597.5" stroke="#fff" stroke-opacity="0.017"/><line x1="1903.8" y1="597.5" x2="2320.2" y2="801.1" stroke="#fff" stroke-opacity="0.026"/><line x1="1738.8" y1="507.9" x2="1825.2" y2="549.5" stroke="#fff" stroke-opacity="0.008"/><line x1="1825.2" y1="549.5" x2="1925.2" y2="597.6" stroke="#fff" stroke-opacity="0.017"/><line x1="1925.2" y1="597.6" x2="2348.1" y2="801.1" stroke="#fff" stroke-opacity="0.026"/><line x1="1757.3" y1="507.9" x2="1845.0" y2="549.5" stroke="#fff" stroke-opacity="0.008"/><line x1="1845.0" y1="549.5" x2="1946.6" y2="597.6" stroke="#fff" stroke-opacity="0.017"/><line x1="1946.6" y1="597.6" x2="2376.1" y2="801.1" stroke="#fff" stroke-opacity="0.026"/><line x1="1794.3" y1="507.9" x2="1884.7" y2="549.5" stroke="#fff" stroke-opacity="0.008"/><line x1="1884.7" y1="549.5" x2="1989.3" y2="597.6" stroke="#fff" stroke-opacity="0.017"/><line x1="1989.3" y1="597.6" x2="2432.1" y2="801.1" stroke="#fff" stroke-opacity="0.026"/><line x1="1812.8" y1="507.9" x2="1904.6" y2="549.5" stroke="#fff" stroke-opacity="0.008"/><line x1="1904.6" y1="549.5" x2="2010.7" y2="597.6" stroke="#fff" stroke-opacity="0.017"/><line x1="2010.7" y1="597.6" x2="2460.0" y2="801.2" stroke="#fff" stroke-opacity="0.026"/><line x1="1831.3" y1="507.9" x2="1924.4" y2="549.5" stroke="#fff" stroke-opacity="0.008"/><line x1="1924.4" y1="549.5" x2="2032.1" y2="597.6" stroke="#fff" stroke-opacity="0.017"/><line x1="2032.1" y1="597.6" x2="2488.0" y2="801.2" stroke="#fff" stroke-opacity="0.026"/><line x1="1849.8" y1="507.9" x2="1944.2" y2="549.5" stroke="#fff" stroke-opacity="0.008"/><line x1="1944.2" y1="549.5" x2="2053.5" y2="597.6" stroke="#fff" stroke-opacity="0.017"/><line x1="2053.5" y1="597.6" x2="2515.9" y2="801.2" stroke="#fff" stroke-opacity="0.026"/><line x1="1868.2" y1="507.9" x2="1964.1" y2="549.5" stroke="#fff" stroke-opacity="0.008"/><line x1="1964.1" y1="549.5" x2="2074.9" y2="597.6" stroke="#fff" stroke-opacity="0.017"/><line x1="2074.9" y1="597.6" x2="2543.9" y2="801.2" stroke="#fff" stroke-opacity="0.026"/><line x1="1886.7" y1="508.0" x2="1983.9" y2="549.5" stroke="#fff" stroke-opacity="0.008"/><line x1="1983.9" y1="549.5" x2="2096.3" y2="597.6" stroke="#fff" stroke-opacity="0.017"/><line x1="2096.3" y1="597.6" x2="2571.9" y2="801.2" stroke="#fff" stroke-opacity="0.026"/><line x1="1905.2" y1="508.0" x2="2003.7" y2="549.5" stroke="#fff" stroke-opacity="0.008"/><line x1="2003.7" y1="549.5" x2="2117.7" y2="597.7" stroke="#fff" stroke-opacity="0.017"/><line x1="2117.7" y1="597.7" x2="2599.8" y2="801.2" stroke="#fff" stroke-opacity="0.026"/><line x1="1923.7" y1="508.0" x2="2023.6" y2="549.6" stroke="#fff" stroke-opacity="0.008"/><line x1="2023.6" y1="549.6" x2="2139.1" y2="597.7" stroke="#fff" stroke-opacity="0.017"/><line x1="2139.1" y1="597.7" x2="2627.8" y2="801.2" stroke="#fff" stroke-opacity="0.026"/><line x1="1942.2" y1="508.0" x2="2043.4" y2="549.6" stroke="#fff" stroke-opacity="0.008"/><line x1="2043.4" y1="549.6" x2="2160.4" y2="597.7" stroke="#fff" stroke-opacity="0.017"/><line x1="2160.4" y1="597.7" x2="2655.8" y2="801.2" stroke="#fff" stroke-opacity="0.026"/><line x1="1979.2" y1="508.0" x2="2083.0" y2="549.6" stroke="#fff" stroke-opacity="0.008"/><line x1="2083.0" y1="549.6" x2="2203.2" y2="597.7" stroke="#fff" stroke-opacity="0.017"/><line x1="2203.2" y1="597.7" x2="2711.7" y2="801.2" stroke="#fff" stroke-opacity="0.026"/><line x1="1997.7" y1="508.0" x2="2102.9" y2="549.6" stroke="#fff" stroke-opacity="0.008"/><line x1="2102.9" y1="549.6" x2="2224.6" y2="597.7" stroke="#fff" stroke-opacity="0.017"/><line x1="2224.6" y1="597.7" x2="2739.6" y2="801.3" stroke="#fff" stroke-opacity="0.026"/><line x1="2016.1" y1="508.0" x2="2122.7" y2="549.6" stroke="#fff" stroke-opacity="0.008"/><line x1="2122.7" y1="549.6" x2="2246.0" y2="597.7" stroke="#fff" stroke-opacity="0.017"/><line x1="2246.0" y1="597.7" x2="2767.6" y2="801.3" stroke="#fff" stroke-opacity="0.026"/><line x1="2034.6" y1="508.0" x2="2142.5" y2="549.6" stroke="#fff" stroke-opacity="0.008"/><line x1="2142.5" y1="549.6" x2="2267.4" y2="597.7" stroke="#fff" stroke-opacity="0.017"/><line x1="2267.4" y1="597.7" x2="2795.5" y2="801.3" stroke="#fff" stroke-opacity="0.026"/><line x1="2053.1" y1="508.1" x2="2162.4" y2="549.6" stroke="#fff" stroke-opacity="0.008"/><line x1="2162.4" y1="549.6" x2="2288.7" y2="597.7" stroke="#fff" stroke-opacity="0.017"/><line x1="2288.7" y1="597.7" x2="2823.5" y2="801.3" stroke="#fff" stroke-opacity="0.026"/><line x1="2071.6" y1="508.1" x2="2182.2" y2="549.6" stroke="#fff" stroke-opacity="0.008"/><line x1="2182.2" y1="549.6" x2="2310.1" y2="597.8" stroke="#fff" stroke-opacity="0.017"/><line x1="2310.1" y1="597.8" x2="2851.4" y2="801.3" stroke="#fff" stroke-opacity="0.026"/><line x1="2090.1" y1="508.1" x2="2202.0" y2="549.7" stroke="#fff" stroke-opacity="0.008"/><line x1="2202.0" y1="549.7" x2="2331.5" y2="597.8" stroke="#fff" stroke-opacity="0.017"/><line x1="2331.5" y1="597.8" x2="2879.4" y2="801.3" stroke="#fff" stroke-opacity="0.026"/><line x1="2108.6" y1="508.1" x2="2221.8" y2="549.7" stroke="#fff" stroke-opacity="0.008"/><line x1="2221.8" y1="549.7" x2="2352.9" y2="597.8" stroke="#fff" stroke-opacity="0.017"/><line x1="2352.9" y1="597.8" x2="2907.3" y2="801.3" stroke="#fff" stroke-opacity="0.026"/><line x1="2127.1" y1="508.1" x2="2241.7" y2="549.7" stroke="#fff" stroke-opacity="0.008"/><line x1="2241.7" y1="549.7" x2="2374.3" y2="597.8" stroke="#fff" stroke-opacity="0.017"/><line x1="2374.3" y1="597.8" x2="2935.3" y2="801.3" stroke="#fff" stroke-opacity="0.026"/><line x1="2164.0" y1="508.1" x2="2281.3" y2="549.7" stroke="#fff" stroke-opacity="0.008"/><line x1="2281.3" y1="549.7" x2="2417.0" y2="597.8" stroke="#fff" stroke-opacity="0.017"/><line x1="2417.0" y1="597.8" x2="2991.2" y2="801.3" stroke="#fff" stroke-opacity="0.026"/><line x1="2182.5" y1="508.1" x2="2301.1" y2="549.7" stroke="#fff" stroke-opacity="0.008"/><line x1="2301.1" y1="549.7" x2="2438.4" y2="597.8" stroke="#fff" stroke-opacity="0.017"/><line x1="2438.4" y1="597.8" x2="3019.1" y2="801.4" stroke="#fff" stroke-opacity="0.026"/><line x1="2201.0" y1="508.1" x2="2321.0" y2="549.7" stroke="#fff" stroke-opacity="0.008"/><line x1="2321.0" y1="549.7" x2="2459.8" y2="597.8" stroke="#fff" stroke-opacity="0.017"/><line x1="2459.8" y1="597.8" x2="3047.1" y2="801.4" stroke="#fff" stroke-opacity="0.026"/><line x1="2219.5" y1="508.1" x2="2340.8" y2="549.7" stroke="#fff" stroke-opacity="0.008"/><line x1="2340.8" y1="549.7" x2="2481.2" y2="597.8" stroke="#fff" stroke-opacity="0.017"/><line x1="2481.2" y1="597.8" x2="3075.0" y2="801.4" stroke="#fff" stroke-opacity="0.026"/><line x1="2237.9" y1="508.2" x2="2360.6" y2="549.7" stroke="#fff" stroke-opacity="0.008"/><line x1="2360.6" y1="549.7" x2="2502.5" y2="597.8" stroke="#fff" stroke-opacity="0.017"/><line x1="2502.5" y1="597.8" x2="3103.0" y2="801.4" stroke="#fff" stroke-opacity="0.026"/><line x1="2256.4" y1="508.2" x2="2380.4" y2="549.8" stroke="#fff" stroke-opacity="0.008"/><line x1="2380.4" y1="549.8" x2="2523.9" y2="597.9" stroke="#fff" stroke-opacity="0.017"/><line x1="2523.9" y1="597.9" x2="3130.9" y2="801.4" stroke="#fff" stroke-opacity="0.026"/><line x1="2274.9" y1="508.2" x2="2400.3" y2="549.8" stroke="#fff" stroke-opacity="0.008"/><line x1="2400.3" y1="549.8" x2="2545.3" y2="597.9" stroke="#fff" stroke-opacity="0.017"/><line x1="2545.3" y1="597.9" x2="3158.8" y2="801.4" stroke="#fff" stroke-opacity="0.026"/><line x1="2293.4" y1="508.2" x2="2420.1" y2="549.8" stroke="#fff" stroke-opacity="0.008"/><line x1="2420.1" y1="549.8" x2="2566.6" y2="597.9" stroke="#fff" stroke-opacity="0.017"/><line x1="2566.6" y1="597.9" x2="3186.8" y2="801.4" stroke="#fff" stroke-opacity="0.026"/><line x1="2311.9" y1="508.2" x2="2439.9" y2="549.8" stroke="#fff" stroke-opacity="0.008"/><line x1="2439.9" y1="549.8" x2="2588.0" y2="597.9" stroke="#fff" stroke-opacity="0.017"/><line x1="2588.0" y1="597.9" x2="3214.7" y2="801.4" stroke="#fff" stroke-opacity="0.026"/><line x1="2348.8" y1="508.2" x2="2479.5" y2="549.8" stroke="#fff" stroke-opacity="0.008"/><line x1="2479.5" y1="549.8" x2="2630.8" y2="597.9" stroke="#fff" stroke-opacity="0.017"/><line x1="2630.8" y1="597.9" x2="3270.6" y2="801.5" stroke="#fff" stroke-opacity="0.026"/><line x1="2367.3" y1="508.2" x2="2499.4" y2="549.8" stroke="#fff" stroke-opacity="0.008"/><line x1="2499.4" y1="549.8" x2="2652.1" y2="597.9" stroke="#fff" stroke-opacity="0.017"/><line x1="2652.1" y1="597.9" x2="3298.5" y2="801.5" stroke="#fff" stroke-opacity="0.026"/><line x1="2385.8" y1="508.2" x2="2519.2" y2="549.8" stroke="#fff" stroke-opacity="0.008"/><line x1="2519.2" y1="549.8" x2="2673.5" y2="597.9" stroke="#fff" stroke-opacity="0.017"/><line x1="2673.5" y1="597.9" x2="3326.5" y2="801.5" stroke="#fff" stroke-opacity="0.026"/><line x1="2404.2" y1="508.3" x2="2539.0" y2="549.8" stroke="#fff" stroke-opacity="0.008"/><line x1="2539.0" y1="549.8" x2="2694.9" y2="597.9" stroke="#fff" stroke-opacity="0.017"/><line x1="2694.9" y1="597.9" x2="3354.4" y2="801.5" stroke="#fff" stroke-opacity="0.026"/><line x1="2422.7" y1="508.3" x2="2558.8" y2="549.8" stroke="#fff" stroke-opacity="0.008"/><line x1="2558.8" y1="549.8" x2="2716.2" y2="598.0" stroke="#fff" stroke-opacity="0.017"/><line x1="2716.2" y1="598.0" x2="3382.3" y2="801.5" stroke="#fff" stroke-opacity="0.026"/><line x1="2441.2" y1="508.3" x2="2578.6" y2="549.9" stroke="#fff" stroke-opacity="0.008"/><line x1="2578.6" y1="549.9" x2="2737.6" y2="598.0" stroke="#fff" stroke-opacity="0.017"/><line x1="2737.6" y1="598.0" x2="3410.3" y2="801.5" stroke="#fff" stroke-opacity="0.026"/><line x1="2459.7" y1="508.3" x2="2598.4" y2="549.9" stroke="#fff" stroke-opacity="0.008"/><line x1="2598.4" y1="549.9" x2="2759.0" y2="598.0" stroke="#fff" stroke-opacity="0.017"/><line x1="2759.0" y1="598.0" x2="3438.2" y2="801.5" stroke="#fff" stroke-opacity="0.026"/><line x1="2478.1" y1="508.3" x2="2618.3" y2="549.9" stroke="#fff" stroke-opacity="0.008"/><line x1="2618.3" y1="549.9" x2="2780.4" y2="598.0" stroke="#fff" stroke-opacity="0.017"/><line x1="2780.4" y1="598.0" x2="3466.1" y2="801.5" stroke="#fff" stroke-opacity="0.026"/><line x1="2496.6" y1="508.3" x2="2638.1" y2="549.9" stroke="#fff" stroke-opacity="0.008"/><line x1="2638.1" y1="549.9" x2="2801.7" y2="598.0" stroke="#fff" stroke-opacity="0.017"/><line x1="2801.7" y1="598.0" x2="3494.0" y2="801.5" stroke="#fff" stroke-opacity="0.026"/></g><g shape-rendering="crispEdges" stroke-width="1"><line x1="0" y1="877.68" x2="1103" y2="878.02" stroke="#626262"/><line x1="0" y1="586.36" x2="1103" y2="586.93" stroke="#626262"/><line x1="0" y1="337.76" x2="1103" y2="338.52" stroke="#626262"/><line x1="0" y1="273.29" x2="1103" y2="274.09" stroke="#626262"/><line x1="0" y1="226.64" x2="1103" y2="227.49" stroke="#606060"/><line x1="0" y1="191.33" x2="1103" y2="192.20" stroke="#5e5e5e"/><line x1="0" y1="163.67" x2="1103" y2="164.56" stroke="#5d5d5d"/><line x1="0" y1="141.41" x2="1103" y2="142.32" stroke="#5b5b5b"/><line x1="0" y1="123.12" x2="1103" y2="124.04" stroke="#595959"/><line x1="0" y1="107.82" x2="1103" y2="108.75" stroke="#575757"/><line x1="0" y1="94.83" x2="1103" y2="95.77" stroke="#565656"/><line x1="0" y1="73.96" x2="1103" y2="74.92" stroke="#525252"/><line x1="0" y1="65.46" x2="1103" y2="66.43" stroke="#525252"/><line x1="0" y1="57.94" x2="1103" y2="58.91" stroke="#525252"/><line x1="0" y1="51.25" x2="1103" y2="52.23" stroke="#525252"/><line x1="0" y1="45.26" x2="1103" y2="46.24" stroke="#525252"/><line x1="-65.42" y1="45.20" x2="17.85" y2="30.52" stroke="#525252"/><line x1="-29.92" y1="45.23" x2="48.55" y2="30.55" stroke="#525252"/><line x1="-57.81" y1="57.89" x2="5.57" y2="45.26" stroke="#525252"/><line x1="5.57" y1="45.26" x2="79.26" y2="30.57" stroke="#525252"/><line x1="-18.19" y1="57.93" x2="41.07" y2="45.29" stroke="#525252"/><line x1="41.07" y1="45.29" x2="109.96" y2="30.60" stroke="#525252"/><line x1="-48.19" y1="73.92" x2="21.43" y2="57.96" stroke="#525252"/><line x1="21.43" y1="57.96" x2="76.56" y2="45.32" stroke="#525252"/><line x1="76.56" y1="45.32" x2="140.66" y2="30.63" stroke="#525252"/><line x1="-87.27" y1="94.75" x2="-3.37" y2="73.96" stroke="#545454"/><line x1="-3.37" y1="73.96" x2="61.04" y2="58.00" stroke="#525252"/><line x1="61.04" y1="58.00" x2="112.05" y2="45.36" stroke="#525252"/><line x1="112.05" y1="45.36" x2="171.36" y2="30.66" stroke="#525252"/><line x1="-35.67" y1="94.80" x2="41.44" y2="74.00" stroke="#545454"/><line x1="41.44" y1="74.00" x2="100.65" y2="58.03" stroke="#525252"/><line x1="100.65" y1="58.03" x2="147.54" y2="45.39" stroke="#525252"/><line x1="147.54" y1="45.39" x2="202.06" y2="30.68" stroke="#525252"/><line x1="-18.70" y1="123.10" x2="67.50" y2="94.88" stroke="#575757"/><line x1="67.50" y1="94.88" x2="131.06" y2="74.08" stroke="#545454"/><line x1="131.06" y1="74.08" x2="179.87" y2="58.10" stroke="#525252"/><line x1="179.87" y1="58.10" x2="218.52" y2="45.45" stroke="#525252"/><line x1="218.52" y1="45.45" x2="263.45" y2="30.74" stroke="#525252"/><line x1="-68.31" y1="163.61" x2="42.08" y2="123.15" stroke="#5b5b5b"/><line x1="42.08" y1="123.15" x2="119.09" y2="94.93" stroke="#575757"/><line x1="119.09" y1="94.93" x2="175.87" y2="74.12" stroke="#545454"/><line x1="175.87" y1="74.12" x2="219.47" y2="58.14" stroke="#525252"/><line x1="219.47" y1="58.14" x2="254.00" y2="45.48" stroke="#525252"/><line x1="254.00" y1="45.48" x2="294.15" y2="30.77" stroke="#525252"/><line x1="-145.37" y1="226.53" x2="5.63" y2="163.67" stroke="#5e5e5e"/><line x1="5.63" y1="163.67" x2="102.85" y2="123.21" stroke="#5b5b5b"/><line x1="102.85" y1="123.21" x2="170.67" y2="94.97" stroke="#575757"/><line x1="170.67" y1="94.97" x2="220.68" y2="74.16" stroke="#545454"/><line x1="220.68" y1="74.16" x2="259.07" y2="58.17" stroke="#525252"/><line x1="259.07" y1="58.17" x2="289.48" y2="45.51" stroke="#525252"/><line x1="289.48" y1="45.51" x2="324.84" y2="30.80" stroke="#525252"/><line x1="-50.97" y1="226.61" x2="79.57" y2="163.73" stroke="#5e5e5e"/><line x1="79.57" y1="163.73" x2="163.61" y2="123.26" stroke="#5b5b5b"/><line x1="163.61" y1="123.26" x2="222.25" y2="95.02" stroke="#575757"/><line x1="222.25" y1="95.02" x2="265.48" y2="74.19" stroke="#545454"/><line x1="265.48" y1="74.19" x2="298.67" y2="58.21" stroke="#525252"/><line x1="298.67" y1="58.21" x2="324.97" y2="45.54" stroke="#525252"/><line x1="324.97" y1="45.54" x2="355.53" y2="30.82" stroke="#525252"/><line x1="-1095.59" y1="877.34" x2="43.42" y2="226.68" stroke="#626262"/><line x1="43.42" y1="226.68" x2="153.50" y2="163.79" stroke="#5e5e5e"/><line x1="153.50" y1="163.79" x2="224.37" y2="123.31" stroke="#5b5b5b"/><line x1="224.37" y1="123.31" x2="273.82" y2="95.06" stroke="#575757"/><line x1="273.82" y1="95.06" x2="310.28" y2="74.23" stroke="#545454"/><line x1="310.28" y1="74.23" x2="338.27" y2="58.24" stroke="#525252"/><line x1="338.27" y1="58.24" x2="360.44" y2="45.58" stroke="#525252"/><line x1="360.44" y1="45.58" x2="386.22" y2="30.85" stroke="#525252"/><line x1="-789.43" y1="877.43" x2="137.79" y2="226.75" stroke="#626262"/><line x1="137.79" y1="226.75" x2="227.42" y2="163.85" stroke="#5e5e5e"/><line x1="227.42" y1="163.85" x2="285.13" y2="123.36" stroke="#5b5b5b"/><line x1="285.13" y1="123.36" x2="325.39" y2="95.11" stroke="#575757"/><line x1="325.39" y1="95.11" x2="355.07" y2="74.27" stroke="#545454"/><line x1="355.07" y1="74.27" x2="377.87" y2="58.28" stroke="#525252"/><line x1="377.87" y1="58.28" x2="395.92" y2="45.61" stroke="#525252"/><line x1="395.92" y1="45.61" x2="416.91" y2="30.88" stroke="#525252"/><line x1="-483.40" y1="877.53" x2="232.16" y2="226.82" stroke="#626262"/><line x1="232.16" y1="226.82" x2="301.34" y2="163.91" stroke="#5e5e5e"/><line x1="301.34" y1="163.91" x2="345.88" y2="123.41" stroke="#5b5b5b"/><line x1="345.88" y1="123.41" x2="376.95" y2="95.15" stroke="#575757"/><line x1="376.95" y1="95.15" x2="399.87" y2="74.31" stroke="#545454"/><line x1="399.87" y1="74.31" x2="417.46" y2="58.31" stroke="#525252"/><line x1="417.46" y1="58.31" x2="431.40" y2="45.64" stroke="#525252"/><line x1="431.40" y1="45.64" x2="447.60" y2="30.91" stroke="#525252"/><line x1="-177.49" y1="877.63" x2="326.51" y2="226.89" stroke="#626262"/><line x1="326.51" y1="226.89" x2="375.24" y2="163.97" stroke="#5e5e5e"/><line x1="375.24" y1="163.97" x2="406.62" y2="123.46" stroke="#5b5b5b"/><line x1="406.62" y1="123.46" x2="428.51" y2="95.19" stroke="#575757"/><line x1="428.51" y1="95.19" x2="444.66" y2="74.35" stroke="#545454"/><line x1="444.66" y1="74.35" x2="457.05" y2="58.35" stroke="#525252"/><line x1="457.05" y1="58.35" x2="466.87" y2="45.67" stroke="#525252"/><line x1="466.87" y1="45.67" x2="478.29" y2="30.93" stroke="#525252"/><line x1="128.28" y1="877.72" x2="420.85" y2="226.97" stroke="#626262"/><line x1="420.85" y1="226.97" x2="449.14" y2="164.03" stroke="#5e5e5e"/><line x1="449.14" y1="164.03" x2="467.36" y2="123.51" stroke="#5b5b5b"/><line x1="467.36" y1="123.51" x2="480.07" y2="95.24" stroke="#575757"/><line x1="480.07" y1="95.24" x2="489.45" y2="74.39" stroke="#545454"/><line x1="489.45" y1="74.39" x2="496.64" y2="58.38" stroke="#525252"/><line x1="496.64" y1="58.38" x2="502.34" y2="45.70" stroke="#525252"/><line x1="502.34" y1="45.70" x2="508.97" y2="30.96" stroke="#525252"/><line x1="739.44" y1="877.91" x2="609.49" y2="227.11" stroke="#626262"/><line x1="609.49" y1="227.11" x2="596.92" y2="164.15" stroke="#5e5e5e"/><line x1="596.92" y1="164.15" x2="588.83" y2="123.61" stroke="#5b5b5b"/><line x1="588.83" y1="123.61" x2="583.18" y2="95.33" stroke="#575757"/><line x1="583.18" y1="95.33" x2="579.01" y2="74.47" stroke="#545454"/><line x1="579.01" y1="74.47" x2="575.82" y2="58.45" stroke="#525252"/><line x1="575.82" y1="58.45" x2="573.28" y2="45.77" stroke="#525252"/><line x1="573.28" y1="45.77" x2="570.34" y2="31.02" stroke="#525252"/><line x1="1044.82" y1="878.01" x2="703.79" y2="227.18" stroke="#626262"/><line x1="703.79" y1="227.18" x2="670.80" y2="164.21" stroke="#5e5e5e"/><line x1="670.80" y1="164.21" x2="649.55" y2="123.66" stroke="#5b5b5b"/><line x1="649.55" y1="123.66" x2="634.73" y2="95.37" stroke="#575757"/><line x1="634.73" y1="95.37" x2="623.79" y2="74.51" stroke="#545454"/><line x1="623.79" y1="74.51" x2="615.40" y2="58.49" stroke="#525252"/><line x1="615.40" y1="58.49" x2="608.75" y2="45.80" stroke="#525252"/><line x1="608.75" y1="45.80" x2="601.02" y2="31.04" stroke="#525252"/><line x1="1350.08" y1="878.10" x2="798.08" y2="227.25" stroke="#626262"/><line x1="798.08" y1="227.25" x2="744.67" y2="164.27" stroke="#5e5e5e"/><line x1="744.67" y1="164.27" x2="710.27" y2="123.71" stroke="#5b5b5b"/><line x1="710.27" y1="123.71" x2="686.27" y2="95.41" stroke="#575757"/><line x1="686.27" y1="95.41" x2="668.57" y2="74.55" stroke="#545454"/><line x1="668.57" y1="74.55" x2="654.98" y2="58.52" stroke="#525252"/><line x1="654.98" y1="58.52" x2="644.21" y2="45.83" stroke="#525252"/><line x1="644.21" y1="45.83" x2="631.70" y2="31.07" stroke="#525252"/><line x1="1655.20" y1="878.20" x2="892.36" y2="227.33" stroke="#626262"/><line x1="892.36" y1="227.33" x2="818.53" y2="164.33" stroke="#5e5e5e"/><line x1="818.53" y1="164.33" x2="770.98" y2="123.76" stroke="#5b5b5b"/><line x1="770.98" y1="123.76" x2="737.81" y2="95.46" stroke="#575757"/><line x1="737.81" y1="95.46" x2="713.34" y2="74.58" stroke="#545454"/><line x1="713.34" y1="74.58" x2="694.56" y2="58.56" stroke="#525252"/><line x1="694.56" y1="58.56" x2="679.68" y2="45.86" stroke="#525252"/><line x1="679.68" y1="45.86" x2="662.38" y2="31.10" stroke="#525252"/><line x1="1960.20" y1="878.29" x2="986.63" y2="227.40" stroke="#626262"/><line x1="986.63" y1="227.40" x2="892.38" y2="164.39" stroke="#5e5e5e"/><line x1="892.38" y1="164.39" x2="831.69" y2="123.81" stroke="#5b5b5b"/><line x1="831.69" y1="123.81" x2="789.34" y2="95.50" stroke="#575757"/><line x1="789.34" y1="95.50" x2="758.12" y2="74.62" stroke="#545454"/><line x1="758.12" y1="74.62" x2="734.13" y2="58.59" stroke="#525252"/><line x1="734.13" y1="58.59" x2="715.14" y2="45.89" stroke="#525252"/><line x1="715.14" y1="45.89" x2="693.05" y2="31.13" stroke="#525252"/><line x1="2265.06" y1="878.39" x2="1080.88" y2="227.47" stroke="#626262"/><line x1="1080.88" y1="227.47" x2="966.23" y2="164.45" stroke="#5e5e5e"/><line x1="966.23" y1="164.45" x2="892.40" y2="123.86" stroke="#5b5b5b"/><line x1="892.40" y1="123.86" x2="840.88" y2="95.55" stroke="#575757"/><line x1="840.88" y1="95.55" x2="802.88" y2="74.66" stroke="#545454"/><line x1="802.88" y1="74.66" x2="773.71" y2="58.63" stroke="#525252"/><line x1="773.71" y1="58.63" x2="750.60" y2="45.92" stroke="#525252"/><line x1="750.60" y1="45.92" x2="723.73" y2="31.15" stroke="#525252"/><line x1="1175.12" y1="227.54" x2="1040.07" y2="164.51" stroke="#5e5e5e"/><line x1="1040.07" y1="164.51" x2="953.09" y2="123.92" stroke="#5b5b5b"/><line x1="953.09" y1="123.92" x2="892.41" y2="95.59" stroke="#575757"/><line x1="892.41" y1="95.59" x2="847.65" y2="74.70" stroke="#545454"/><line x1="847.65" y1="74.70" x2="813.28" y2="58.66" stroke="#525252"/><line x1="813.28" y1="58.66" x2="786.06" y2="45.95" stroke="#525252"/><line x1="786.06" y1="45.95" x2="754.41" y2="31.18" stroke="#525252"/><line x1="1113.90" y1="164.57" x2="1013.79" y2="123.97" stroke="#5b5b5b"/><line x1="1013.79" y1="123.97" x2="943.93" y2="95.63" stroke="#575757"/><line x1="943.93" y1="95.63" x2="892.41" y2="74.74" stroke="#545454"/><line x1="892.41" y1="74.74" x2="852.85" y2="58.69" stroke="#525252"/><line x1="852.85" y1="58.69" x2="821.51" y2="45.99" stroke="#525252"/><line x1="821.51" y1="45.99" x2="785.08" y2="31.21" stroke="#525252"/><line x1="1187.72" y1="164.63" x2="1074.48" y2="124.02" stroke="#5b5b5b"/><line x1="1074.48" y1="124.02" x2="995.45" y2="95.68" stroke="#575757"/><line x1="995.45" y1="95.68" x2="937.17" y2="74.78" stroke="#545454"/><line x1="937.17" y1="74.78" x2="892.42" y2="58.73" stroke="#525252"/><line x1="892.42" y1="58.73" x2="856.97" y2="46.02" stroke="#525252"/><line x1="856.97" y1="46.02" x2="815.75" y2="31.24" stroke="#525252"/><line x1="1195.84" y1="124.12" x2="1098.48" y2="95.77" stroke="#575757"/><line x1="1098.48" y1="95.77" x2="1026.68" y2="74.86" stroke="#545454"/><line x1="1026.68" y1="74.86" x2="971.55" y2="58.80" stroke="#525252"/><line x1="971.55" y1="58.80" x2="927.87" y2="46.08" stroke="#525252"/><line x1="927.87" y1="46.08" x2="877.09" y2="31.29" stroke="#525252"/><line x1="1149.99" y1="95.81" x2="1071.44" y2="74.90" stroke="#545454"/><line x1="1071.44" y1="74.90" x2="1011.11" y2="58.83" stroke="#525252"/><line x1="1011.11" y1="58.83" x2="963.32" y2="46.11" stroke="#525252"/><line x1="963.32" y1="46.11" x2="907.76" y2="31.32" stroke="#525252"/><line x1="1116.18" y1="74.93" x2="1050.67" y2="58.87" stroke="#525252"/><line x1="1050.67" y1="58.87" x2="998.77" y2="46.14" stroke="#525252"/><line x1="998.77" y1="46.14" x2="938.43" y2="31.35" stroke="#525252"/><line x1="1160.93" y1="74.97" x2="1090.22" y2="58.90" stroke="#525252"/><line x1="1090.22" y1="58.90" x2="1034.22" y2="46.18" stroke="#525252"/><line x1="1034.22" y1="46.18" x2="969.09" y2="31.37" stroke="#525252"/><line x1="1129.78" y1="58.94" x2="1069.66" y2="46.21" stroke="#525252"/><line x1="1069.66" y1="46.21" x2="999.76" y2="31.40" stroke="#525252"/><line x1="1169.33" y1="58.97" x2="1105.10" y2="46.24" stroke="#525252"/><line x1="1105.10" y1="46.24" x2="1030.42" y2="31.43" stroke="#525252"/><line x1="1140.54" y1="46.27" x2="1061.08" y2="31.46" stroke="#525252"/><line x1="1175.98" y1="46.30" x2="1091.74" y2="31.49" stroke="#525252"/><line x1="0" y1="432.69" x2="1103" y2="433.38" stroke="#6c6c6c"/><line x1="0" y1="83.66" x2="1103" y2="84.61" stroke="#707070"/><line x1="-79.48" y1="123.05" x2="15.92" y2="94.84" stroke="#6a6a6a"/><line x1="15.92" y1="94.84" x2="86.25" y2="74.04" stroke="#6a6a6a"/><line x1="86.25" y1="74.04" x2="140.26" y2="58.07" stroke="#6a6a6a"/><line x1="140.26" y1="58.07" x2="183.03" y2="45.42" stroke="#6a6a6a"/><line x1="183.03" y1="45.42" x2="232.76" y2="30.71" stroke="#6a6a6a"/><line x1="433.92" y1="877.82" x2="515.18" y2="227.04" stroke="#6a6a6a"/><line x1="515.18" y1="227.04" x2="523.04" y2="164.09" stroke="#6a6a6a"/><line x1="523.04" y1="164.09" x2="528.10" y2="123.56" stroke="#6a6a6a"/><line x1="528.10" y1="123.56" x2="531.63" y2="95.28" stroke="#6a6a6a"/><line x1="531.63" y1="95.28" x2="534.23" y2="74.43" stroke="#6a6a6a"/><line x1="534.23" y1="74.43" x2="536.23" y2="58.42" stroke="#6a6a6a"/><line x1="536.23" y1="58.42" x2="537.81" y2="45.73" stroke="#6a6a6a"/><line x1="537.81" y1="45.73" x2="539.65" y2="30.99" stroke="#6a6a6a"/><line x1="1135.16" y1="124.07" x2="1046.97" y2="95.72" stroke="#6a6a6a"/><line x1="1046.97" y1="95.72" x2="981.93" y2="74.82" stroke="#6a6a6a"/><line x1="981.93" y1="74.82" x2="931.98" y2="58.76" stroke="#6a6a6a"/><line x1="931.98" y1="58.76" x2="892.42" y2="46.05" stroke="#6a6a6a"/><line x1="892.42" y1="46.05" x2="846.42" y2="31.26" stroke="#6a6a6a"/></g><rect x="995" y="54" width="16" height="1" fill="#5e5e5e"/><rect x="995" y="57" width="16" height="1" fill="#5e5e5e"/>
<polygon points="21.2,537.2 489.2,537.2 490.4,539.4 19.8,539.4" fill="#7f7f7f" />
<polygon points="514.6,292.6 515.9,292.6 490.5,539.4 489.2,537.2" fill="#7f7f7f" />
<polygon points="236.8,292.4 235.8,292.7 19.8,539.4 21.2,537.2" fill="#9a9a9a" />
<polygon points="561.3,537.2 1029.0,537.6 1030.6,539.8 560.1,539.4" fill="#7f7f7f" />
<polygon points="557.3,292.7 556.1,292.7 560.1,539.4 561.3,537.2" fill="#7f7f7f" />
<polygon points="835.8,293.0 837.0,293.3 1030.6,539.8 1029.0,537.6" fill="#9a9a9a" />
<polygon points="556.1,291.8 836.3,292.1 835.8,293.0 557.3,292.7" fill="#8c8c8c" />
<polygon points="236.8,292.4 514.6,292.6 489.2,537.2 21.2,537.2" fill="#ffffff" stroke="#8e8e8e" stroke-width="1.5" stroke-linejoin="miter"/>
<polygon points="236.8,292.4 514.6,292.6 489.2,537.2 21.2,537.2" fill="#ffffff" />
<polygon points="557.3,292.7 835.8,293.0 1029.0,537.6 561.3,537.2" fill="#ffffff" stroke="#8e8e8e" stroke-width="1.5" stroke-linejoin="miter"/>
<polygon points="557.3,292.7 835.8,293.0 1029.0,537.6 561.3,537.2" fill="#ffffff" />
<polygon points="242.1,297.5 505.1,297.4 474.7,522.1 49.0,522.2" fill="#bfeefe" />
<polygon points="567.1,297.4 830.4,297.4 1003.5,523.0 576.7,522.2" fill="#bfeefe" />
<polygon points="242.1,297.5 505.1,297.4 474.7,522.1 49.0,522.2" fill="none" stroke="#124e62" stroke-width="1" shape-rendering="crispEdges"/>
<polygon points="567.1,297.4 830.4,297.4 1003.5,523.0 576.7,522.2" fill="none" stroke="#124e62" stroke-width="1" shape-rendering="crispEdges"/>
<polygon points="487.6,362.2 570.6,362.2 571.6,408.3 480.2,408.3" fill="#8fd8ff" fill-opacity="0.18"/>
<polygon points="507.3,362.2 558.4,362.2 559.2,408.3 502.7,408.3" fill="#516168" />
<polygon points="487.6,362.2 497.0,362.2 490.6,408.0 480.2,408.0" fill="#bdeafc" fill-opacity="0.9"/>
<line x1="487.6" y1="362.2" x2="480.2" y2="408" stroke="#2a7c8c" stroke-width="1"/>
<line x1="487.6" y1="362.2" x2="570.6" y2="362.2" stroke="#f3c98a" stroke-width="1"/>
<line x1="507.3" y1="362.2" x2="558.4" y2="362.2" stroke="#e99a32" stroke-width="1.2"/>
<line x1="480.2" y1="408.3" x2="571.6" y2="408.3" stroke="#fbe6c8" stroke-width="1"/>
<line x1="502.7" y1="408.3" x2="571.8" y2="408.3" stroke="#e99a32" stroke-width="1.2"/>
<path d="M492.6 378.2 Q 527 356.5 561.6 378.4" fill="none" stroke="#2c6b80" stroke-width="1.0"/>
<path d="M492.2 378.6 L498.4 375.8 M492.2 378.6 L495.4 372.6" fill="none" stroke="#2c6b80" stroke-width="1.2"/>
<path d="M561.8 378.8 L557.6 373.6" fill="none" stroke="#2c6b80" stroke-width="1.4"/>
<path d="M521.2 386.4 V381 Q521.2 379 523.2 379 H533.3 Q535.3 379 535.3 381 V386.4 H533.6 Q532.6 381.8 528.25 381.8 Q523.9 381.8 522.9 386.4 Z" fill="#f4683a"/>
<path d="M523 380.4 h2.2 M526.6 380.2 h3.2 M531.4 380.4 h2.2" stroke="#f9a284" stroke-width="0.7"/>
<rect x="521.2" y="387.1" width="14.1" height="4.1" rx="0.6" fill="#86d4fb"/>
<rect x="168.5" y="380.90" width="325.9" height="1.1" fill="#5eaaa6"/><rect x="168.5" y="381.95" width="325.9" height="1.1" fill="#5db07c"/><rect x="168.5" y="383.00" width="325.9" height="1.1" fill="#6cb0b6"/><rect x="168.5" y="384.05" width="325.9" height="1.1" fill="#58b074"/>
<rect x="166.6" y="381.3" width="3" height="3.2" fill="#1d5a2a"/>
<rect x="492.6" y="381.6" width="2.6" height="2.8" fill="#1d5a2a"/>
<rect x="483.2" y="381.8" width="2" height="2.4" fill="#2c6e44"/>
<line x1="571.8" y1="382.7" x2="896.5" y2="382.0" stroke="#49a574" stroke-width="1.2"/>
<line x1="571.8" y1="384.2" x2="674" y2="384.0" stroke="#55ad70" stroke-width="1"/>
<rect x="570.4" y="381.6" width="2.6" height="3" fill="#1d5a2a"/>
<rect x="895.2" y="380.8" width="2.6" height="2.8" fill="#1d5a2a"/>
<g shape-rendering="crispEdges"><path fill="#b58c98" d="M372 298h1v1h-1zM372 299h1v1h-1zM371 300h1v1h-1zM371 301h1v1h-1zM370 302h1v1h-1zM370 303h1v1h-1zM369 304h1v1h-1zM369 305h1v1h-1zM368 306h1v1h-1zM368 307h1v1h-1zM367 308h1v1h-1zM367 309h1v1h-1zM366 310h1v1h-1zM366 311h1v1h-1zM365 312h1v1h-1zM365 313h1v1h-1zM364 314h1v1h-1zM364 315h1v1h-1zM363 316h1v1h-1zM363 317h1v1h-1zM362 318h1v1h-1zM362 319h1v1h-1zM361 320h1v1h-1zM361 321h1v1h-1zM360 322h1v1h-1zM360 323h1v1h-1zM359 324h1v1h-1zM359 325h1v1h-1zM358 326h1v1h-1zM358 327h1v1h-1zM357 328h1v1h-1zM357 329h1v1h-1zM356 330h1v1h-1zM356 331h1v1h-1zM355 332h1v1h-1zM355 333h1v1h-1zM354 334h1v1h-1zM354 335h1v1h-1zM353 336h1v1h-1zM353 337h1v1h-1zM352 338h1v1h-1zM352 339h1v1h-1zM351 340h1v1h-1zM351 341h1v1h-1zM350 342h1v1h-1zM350 343h1v1h-1zM349 344h1v1h-1zM349 345h1v1h-1zM348 346h1v1h-1zM348 347h1v1h-1zM347 348h1v1h-1zM347 349h1v1h-1zM346 350h1v1h-1zM346 351h1v1h-1zM345 352h1v1h-1zM345 353h1v1h-1zM344 354h1v1h-1zM344 355h1v1h-1zM343 356h1v1h-1zM343 357h1v1h-1zM342 358h1v1h-1zM342 359h1v1h-1zM341 360h1v1h-1zM341 361h1v1h-1zM340 362h1v1h-1zM340 363h1v1h-1zM339 364h1v1h-1zM339 365h1v1h-1zM338 366h1v1h-1zM338 367h1v1h-1zM337 368h1v1h-1zM337 369h1v1h-1zM336 370h1v1h-1zM336 371h1v1h-1zM335 372h1v1h-1zM335 373h1v1h-1zM334 374h1v1h-1zM334 375h1v1h-1zM333 376h1v1h-1zM333 377h1v1h-1zM332 378h1v1h-1zM332 379h1v1h-1zM331 380h1v1h-1zM331 381h1v1h-1zM330 382h1v1h-1zM330 383h1v1h-1zM329 384h1v1h-1zM329 385h1v1h-1zM328 386h1v1h-1zM328 387h1v1h-1zM327 388h1v1h-1zM327 389h1v1h-1zM326 390h1v1h-1zM326 391h1v1h-1zM325 392h1v1h-1zM325 393h1v1h-1zM324 394h1v1h-1zM324 395h1v1h-1zM323 396h1v1h-1zM323 397h1v1h-1zM322 398h1v1h-1zM322 399h1v1h-1zM321 400h1v1h-1zM321 401h1v1h-1zM320 402h1v1h-1zM320 403h1v1h-1zM319 404h1v1h-1zM319 405h1v1h-1zM318 406h1v1h-1zM318 407h1v1h-1zM317 408h1v1h-1zM317 409h1v1h-1zM316 410h1v1h-1zM316 411h1v1h-1zM315 412h1v1h-1zM315 413h1v1h-1zM314 414h1v1h-1zM314 415h1v1h-1zM313 416h1v1h-1zM313 417h1v1h-1zM312 418h1v1h-1zM312 419h1v1h-1zM311 420h1v1h-1zM311 421h1v1h-1zM310 422h1v1h-1zM310 423h1v1h-1zM309 424h1v1h-1zM309 425h1v1h-1zM308 426h1v1h-1zM308 427h1v1h-1zM307 428h1v1h-1zM307 429h1v1h-1zM306 430h1v1h-1zM306 431h1v1h-1zM305 432h1v1h-1zM305 433h1v1h-1zM304 434h1v1h-1zM304 435h1v1h-1zM303 436h1v1h-1zM303 437h1v1h-1zM302 438h1v1h-1zM302 439h1v1h-1zM301 440h1v1h-1zM301 441h1v1h-1zM300 442h1v1h-1zM300 443h1v1h-1zM299 444h1v1h-1zM299 445h1v1h-1zM298 446h1v1h-1zM298 447h1v1h-1zM297 448h1v1h-1zM297 449h1v1h-1zM296 450h1v1h-1zM296 451h1v1h-1zM295 452h1v1h-1zM295 453h1v1h-1zM294 454h1v1h-1zM294 455h1v1h-1zM293 456h1v1h-1zM293 457h1v1h-1zM292 458h1v1h-1zM292 459h1v1h-1zM291 460h1v1h-1zM291 461h1v1h-1zM290 462h1v1h-1zM290 463h1v1h-1zM289 464h1v1h-1zM289 465h1v1h-1zM289 466h1v1h-1zM288 467h1v1h-1zM288 468h1v1h-1zM287 469h1v1h-1zM287 470h1v1h-1zM286 471h1v1h-1zM286 472h1v1h-1zM285 473h1v1h-1zM285 474h1v1h-1zM284 475h1v1h-1zM284 476h1v1h-1zM283 477h1v1h-1zM283 478h1v1h-1zM282 479h1v1h-1zM282 480h1v1h-1zM281 481h1v1h-1zM281 482h1v1h-1zM280 483h1v1h-1zM280 484h1v1h-1zM279 485h1v1h-1zM279 486h1v1h-1zM278 487h1v1h-1zM278 488h1v1h-1zM277 489h1v1h-1zM277 490h1v1h-1zM276 491h1v1h-1zM276 492h1v1h-1zM275 493h1v1h-1zM275 494h1v1h-1zM274 495h1v1h-1zM274 496h1v1h-1zM273 497h1v1h-1zM273 498h1v1h-1zM272 499h1v1h-1zM272 500h1v1h-1zM271 501h1v1h-1zM271 502h1v1h-1zM270 503h1v1h-1zM270 504h1v1h-1zM269 505h1v1h-1zM269 506h1v1h-1zM268 507h1v1h-1zM268 508h1v1h-1zM267 509h1v1h-1zM267 510h1v1h-1zM266 511h1v1h-1zM266 512h1v1h-1zM265 513h1v1h-1zM265 514h1v1h-1zM264 515h1v1h-1zM264 516h1v1h-1zM263 517h1v1h-1zM263 518h1v1h-1zM262 519h1v1h-1zM262 520h1v1h-1zM261 521h1v1h-1z"/><path fill="#93307c" d="M373 298h1v1h-1zM374 298h1v1h-1zM372 300h1v1h-1zM373 300h1v1h-1zM371 302h1v1h-1zM372 302h1v1h-1zM370 304h1v1h-1zM371 304h1v1h-1zM369 306h1v1h-1zM370 306h1v1h-1zM368 308h1v1h-1zM369 308h1v1h-1zM367 310h1v1h-1zM368 310h1v1h-1zM366 312h1v1h-1zM367 312h1v1h-1zM365 314h1v1h-1zM366 314h1v1h-1zM364 316h1v1h-1zM365 316h1v1h-1zM363 318h1v1h-1zM364 318h1v1h-1zM362 320h1v1h-1zM363 320h1v1h-1zM361 322h1v1h-1zM362 322h1v1h-1zM360 324h1v1h-1zM361 324h1v1h-1zM359 326h1v1h-1zM360 326h1v1h-1zM358 328h1v1h-1zM359 328h1v1h-1zM357 330h1v1h-1zM358 330h1v1h-1zM356 332h1v1h-1zM357 332h1v1h-1zM355 334h1v1h-1zM356 334h1v1h-1zM354 336h1v1h-1zM355 336h1v1h-1zM353 338h1v1h-1zM354 338h1v1h-1zM352 340h1v1h-1zM353 340h1v1h-1zM351 342h1v1h-1zM352 342h1v1h-1zM350 344h1v1h-1zM351 344h1v1h-1zM349 346h1v1h-1zM350 346h1v1h-1zM348 348h1v1h-1zM349 348h1v1h-1zM347 350h1v1h-1zM348 350h1v1h-1zM346 352h1v1h-1zM347 352h1v1h-1zM345 354h1v1h-1zM346 354h1v1h-1zM344 356h1v1h-1zM345 356h1v1h-1zM343 358h1v1h-1zM344 358h1v1h-1zM342 360h1v1h-1zM343 360h1v1h-1zM341 362h1v1h-1zM342 362h1v1h-1zM340 364h1v1h-1zM341 364h1v1h-1zM339 366h1v1h-1zM340 366h1v1h-1zM338 368h1v1h-1zM339 368h1v1h-1zM337 370h1v1h-1zM338 370h1v1h-1zM336 372h1v1h-1zM337 372h1v1h-1zM335 374h1v1h-1zM336 374h1v1h-1zM334 376h1v1h-1zM335 376h1v1h-1zM333 378h1v1h-1zM334 378h1v1h-1zM332 380h1v1h-1zM333 380h1v1h-1zM331 382h1v1h-1zM332 382h1v1h-1zM330 384h1v1h-1zM331 384h1v1h-1zM329 386h1v1h-1zM330 386h1v1h-1zM328 388h1v1h-1zM329 388h1v1h-1zM327 390h1v1h-1zM328 390h1v1h-1zM326 392h1v1h-1zM327 392h1v1h-1zM325 394h1v1h-1zM326 394h1v1h-1zM324 396h1v1h-1zM325 396h1v1h-1zM323 398h1v1h-1zM324 398h1v1h-1zM322 400h1v1h-1zM323 400h1v1h-1zM321 402h1v1h-1zM322 402h1v1h-1zM320 404h1v1h-1zM321 404h1v1h-1zM319 406h1v1h-1zM320 406h1v1h-1zM318 408h1v1h-1zM319 408h1v1h-1zM317 410h1v1h-1zM318 410h1v1h-1zM316 412h1v1h-1zM317 412h1v1h-1zM315 414h1v1h-1zM316 414h1v1h-1zM314 416h1v1h-1zM315 416h1v1h-1zM313 418h1v1h-1zM314 418h1v1h-1zM312 420h1v1h-1zM313 420h1v1h-1zM311 422h1v1h-1zM312 422h1v1h-1zM310 424h1v1h-1zM311 424h1v1h-1zM309 426h1v1h-1zM310 426h1v1h-1zM308 428h1v1h-1zM309 428h1v1h-1zM307 430h1v1h-1zM308 430h1v1h-1zM306 432h1v1h-1zM307 432h1v1h-1zM305 434h1v1h-1zM306 434h1v1h-1zM304 436h1v1h-1zM305 436h1v1h-1zM303 438h1v1h-1zM304 438h1v1h-1zM302 440h1v1h-1zM303 440h1v1h-1zM301 442h1v1h-1zM302 442h1v1h-1zM300 444h1v1h-1zM301 444h1v1h-1zM299 446h1v1h-1zM300 446h1v1h-1zM298 448h1v1h-1zM299 448h1v1h-1zM297 450h1v1h-1zM298 450h1v1h-1zM296 452h1v1h-1zM297 452h1v1h-1zM295 454h1v1h-1zM296 454h1v1h-1zM294 456h1v1h-1zM295 456h1v1h-1zM293 458h1v1h-1zM294 458h1v1h-1zM292 460h1v1h-1zM293 460h1v1h-1zM291 462h1v1h-1zM292 462h1v1h-1zM290 464h1v1h-1zM291 464h1v1h-1zM290 466h1v1h-1zM291 466h1v1h-1zM289 468h1v1h-1zM290 468h1v1h-1zM288 470h1v1h-1zM289 470h1v1h-1zM287 472h1v1h-1zM288 472h1v1h-1zM286 474h1v1h-1zM287 474h1v1h-1zM285 476h1v1h-1zM286 476h1v1h-1zM284 478h1v1h-1zM285 478h1v1h-1zM283 480h1v1h-1zM284 480h1v1h-1zM282 482h1v1h-1zM283 482h1v1h-1zM281 484h1v1h-1zM282 484h1v1h-1zM280 486h1v1h-1zM281 486h1v1h-1zM279 488h1v1h-1zM280 488h1v1h-1zM278 490h1v1h-1zM279 490h1v1h-1zM277 492h1v1h-1zM278 492h1v1h-1zM276 494h1v1h-1zM277 494h1v1h-1zM275 496h1v1h-1zM276 496h1v1h-1zM274 498h1v1h-1zM275 498h1v1h-1zM273 500h1v1h-1zM274 500h1v1h-1zM272 502h1v1h-1zM273 502h1v1h-1zM271 504h1v1h-1zM272 504h1v1h-1zM270 506h1v1h-1zM271 506h1v1h-1zM269 508h1v1h-1zM270 508h1v1h-1zM268 510h1v1h-1zM269 510h1v1h-1zM267 512h1v1h-1zM268 512h1v1h-1zM266 514h1v1h-1zM267 514h1v1h-1zM265 516h1v1h-1zM266 516h1v1h-1zM264 518h1v1h-1zM265 518h1v1h-1zM263 520h1v1h-1zM264 520h1v1h-1z"/><path fill="#a04a9a" d="M373 299h1v1h-1zM372 301h1v1h-1zM374 301h1v1h-1zM371 303h1v1h-1zM370 305h1v1h-1zM372 305h1v1h-1zM369 307h1v1h-1zM368 309h1v1h-1zM370 309h1v1h-1zM367 311h1v1h-1zM366 313h1v1h-1zM368 313h1v1h-1zM365 315h1v1h-1zM364 317h1v1h-1zM366 317h1v1h-1zM363 319h1v1h-1zM362 321h1v1h-1zM364 321h1v1h-1zM361 323h1v1h-1zM360 325h1v1h-1zM362 325h1v1h-1zM359 327h1v1h-1zM358 329h1v1h-1zM360 329h1v1h-1zM357 331h1v1h-1zM356 333h1v1h-1zM358 333h1v1h-1zM355 335h1v1h-1zM354 337h1v1h-1zM356 337h1v1h-1zM353 339h1v1h-1zM352 341h1v1h-1zM354 341h1v1h-1zM351 343h1v1h-1zM350 345h1v1h-1zM352 345h1v1h-1zM349 347h1v1h-1zM348 349h1v1h-1zM350 349h1v1h-1zM347 351h1v1h-1zM346 353h1v1h-1zM348 353h1v1h-1zM345 355h1v1h-1zM344 357h1v1h-1zM346 357h1v1h-1zM343 359h1v1h-1zM342 361h1v1h-1zM344 361h1v1h-1zM341 363h1v1h-1zM340 365h1v1h-1zM342 365h1v1h-1zM339 367h1v1h-1zM338 369h1v1h-1zM340 369h1v1h-1zM337 371h1v1h-1zM336 373h1v1h-1zM338 373h1v1h-1zM335 375h1v1h-1zM334 377h1v1h-1zM336 377h1v1h-1zM333 379h1v1h-1zM332 381h1v1h-1zM334 381h1v1h-1zM331 383h1v1h-1zM330 385h1v1h-1zM332 385h1v1h-1zM329 387h1v1h-1zM328 389h1v1h-1zM330 389h1v1h-1zM327 391h1v1h-1zM326 393h1v1h-1zM328 393h1v1h-1zM325 395h1v1h-1zM324 397h1v1h-1zM326 397h1v1h-1zM323 399h1v1h-1zM322 401h1v1h-1zM324 401h1v1h-1zM321 403h1v1h-1zM320 405h1v1h-1zM322 405h1v1h-1zM319 407h1v1h-1zM318 409h1v1h-1zM320 409h1v1h-1zM317 411h1v1h-1zM316 413h1v1h-1zM318 413h1v1h-1zM315 415h1v1h-1zM314 417h1v1h-1zM316 417h1v1h-1zM313 419h1v1h-1zM312 421h1v1h-1zM314 421h1v1h-1zM311 423h1v1h-1zM310 425h1v1h-1zM312 425h1v1h-1zM309 427h1v1h-1zM308 429h1v1h-1zM310 429h1v1h-1zM307 431h1v1h-1zM306 433h1v1h-1zM308 433h1v1h-1zM305 435h1v1h-1zM304 437h1v1h-1zM306 437h1v1h-1zM303 439h1v1h-1zM302 441h1v1h-1zM304 441h1v1h-1zM301 443h1v1h-1zM300 445h1v1h-1zM302 445h1v1h-1zM299 447h1v1h-1zM298 449h1v1h-1zM300 449h1v1h-1zM297 451h1v1h-1zM296 453h1v1h-1zM298 453h1v1h-1zM295 455h1v1h-1zM294 457h1v1h-1zM296 457h1v1h-1zM293 459h1v1h-1zM292 461h1v1h-1zM294 461h1v1h-1zM291 463h1v1h-1zM290 465h1v1h-1zM292 465h1v1h-1zM289 467h1v1h-1zM288 469h1v1h-1zM290 469h1v1h-1zM287 471h1v1h-1zM286 473h1v1h-1zM288 473h1v1h-1zM285 475h1v1h-1zM284 477h1v1h-1zM286 477h1v1h-1zM283 479h1v1h-1zM282 481h1v1h-1zM284 481h1v1h-1zM281 483h1v1h-1zM280 485h1v1h-1zM282 485h1v1h-1zM279 487h1v1h-1zM278 489h1v1h-1zM280 489h1v1h-1zM277 491h1v1h-1zM276 493h1v1h-1zM278 493h1v1h-1zM275 495h1v1h-1zM274 497h1v1h-1zM276 497h1v1h-1zM273 499h1v1h-1zM272 501h1v1h-1zM274 501h1v1h-1zM271 503h1v1h-1zM270 505h1v1h-1zM272 505h1v1h-1zM269 507h1v1h-1zM268 509h1v1h-1zM270 509h1v1h-1zM267 511h1v1h-1zM266 513h1v1h-1zM268 513h1v1h-1zM265 515h1v1h-1zM264 517h1v1h-1zM266 517h1v1h-1zM263 519h1v1h-1zM262 521h1v1h-1zM264 521h1v1h-1z"/></g>
<g shape-rendering="crispEdges"><path fill="#bf8ad0" d="M699 298h1v1h-1zM699 299h1v1h-1zM699 300h1v1h-1zM700 301h1v1h-1zM700 302h1v1h-1zM701 303h1v1h-1zM701 304h1v1h-1zM702 305h1v1h-1zM702 306h1v1h-1zM702 307h1v1h-1zM703 308h1v1h-1zM703 309h1v1h-1zM704 310h1v1h-1zM704 311h1v1h-1zM704 312h1v1h-1zM705 313h1v1h-1zM705 314h1v1h-1zM706 315h1v1h-1zM706 316h1v1h-1zM706 317h1v1h-1zM707 318h1v1h-1zM707 319h1v1h-1zM708 320h1v1h-1zM708 321h1v1h-1zM709 322h1v1h-1zM709 323h1v1h-1zM709 324h1v1h-1zM710 325h1v1h-1zM710 326h1v1h-1zM711 327h1v1h-1zM711 328h1v1h-1zM711 329h1v1h-1zM712 330h1v1h-1zM712 331h1v1h-1zM713 332h1v1h-1zM713 333h1v1h-1zM713 334h1v1h-1zM714 335h1v1h-1zM714 336h1v1h-1zM715 337h1v1h-1zM715 338h1v1h-1zM715 339h1v1h-1zM716 340h1v1h-1zM716 341h1v1h-1zM717 342h1v1h-1zM717 343h1v1h-1zM718 344h1v1h-1zM718 345h1v1h-1zM718 346h1v1h-1zM719 347h1v1h-1zM719 348h1v1h-1zM720 349h1v1h-1zM720 350h1v1h-1zM720 351h1v1h-1zM721 352h1v1h-1zM721 353h1v1h-1zM722 354h1v1h-1zM722 355h1v1h-1zM722 356h1v1h-1zM723 357h1v1h-1zM723 358h1v1h-1zM724 359h1v1h-1zM724 360h1v1h-1zM724 361h1v1h-1zM725 362h1v1h-1zM725 363h1v1h-1zM726 364h1v1h-1zM726 365h1v1h-1zM727 366h1v1h-1zM727 367h1v1h-1zM727 368h1v1h-1zM728 369h1v1h-1zM728 370h1v1h-1zM729 371h1v1h-1zM729 372h1v1h-1zM729 373h1v1h-1zM730 374h1v1h-1zM730 375h1v1h-1zM731 376h1v1h-1zM731 377h1v1h-1zM731 378h1v1h-1zM732 379h1v1h-1zM732 380h1v1h-1zM733 381h1v1h-1zM733 382h1v1h-1zM733 383h1v1h-1zM734 384h1v1h-1zM734 385h1v1h-1zM735 386h1v1h-1zM735 387h1v1h-1zM736 388h1v1h-1zM736 389h1v1h-1zM736 390h1v1h-1zM737 391h1v1h-1zM737 392h1v1h-1zM738 393h1v1h-1zM738 394h1v1h-1zM738 395h1v1h-1zM739 396h1v1h-1zM739 397h1v1h-1zM740 398h1v1h-1zM740 399h1v1h-1zM740 400h1v1h-1zM741 401h1v1h-1zM741 402h1v1h-1zM742 403h1v1h-1zM742 404h1v1h-1zM743 405h1v1h-1zM743 406h1v1h-1zM743 407h1v1h-1zM744 408h1v1h-1zM744 409h1v1h-1zM745 410h1v1h-1zM745 411h1v1h-1zM745 412h1v1h-1zM746 413h1v1h-1zM746 414h1v1h-1zM747 415h1v1h-1zM747 416h1v1h-1zM747 417h1v1h-1zM748 418h1v1h-1zM748 419h1v1h-1zM749 420h1v1h-1zM749 421h1v1h-1zM749 422h1v1h-1zM750 423h1v1h-1zM750 424h1v1h-1zM751 425h1v1h-1zM751 426h1v1h-1zM752 427h1v1h-1zM752 428h1v1h-1zM752 429h1v1h-1zM753 430h1v1h-1zM753 431h1v1h-1zM754 432h1v1h-1zM754 433h1v1h-1zM754 434h1v1h-1zM755 435h1v1h-1zM755 436h1v1h-1zM756 437h1v1h-1zM756 438h1v1h-1zM756 439h1v1h-1zM757 440h1v1h-1zM757 441h1v1h-1zM758 442h1v1h-1zM758 443h1v1h-1zM758 444h1v1h-1zM759 445h1v1h-1zM759 446h1v1h-1zM760 447h1v1h-1zM760 448h1v1h-1zM761 449h1v1h-1zM761 450h1v1h-1zM761 451h1v1h-1zM762 452h1v1h-1zM762 453h1v1h-1zM763 454h1v1h-1zM763 455h1v1h-1zM763 456h1v1h-1zM764 457h1v1h-1zM764 458h1v1h-1zM765 459h1v1h-1zM765 460h1v1h-1zM765 461h1v1h-1zM766 462h1v1h-1zM766 463h1v1h-1zM767 464h1v1h-1zM767 465h1v1h-1zM768 466h1v1h-1zM768 467h1v1h-1zM768 468h1v1h-1zM769 469h1v1h-1zM769 470h1v1h-1zM770 471h1v1h-1zM770 472h1v1h-1zM770 473h1v1h-1zM771 474h1v1h-1zM771 475h1v1h-1zM772 476h1v1h-1zM772 477h1v1h-1zM772 478h1v1h-1zM773 479h1v1h-1zM773 480h1v1h-1zM774 481h1v1h-1zM774 482h1v1h-1zM774 483h1v1h-1zM775 484h1v1h-1zM775 485h1v1h-1zM776 486h1v1h-1zM776 487h1v1h-1zM777 488h1v1h-1zM777 489h1v1h-1zM777 490h1v1h-1zM778 491h1v1h-1zM778 492h1v1h-1zM779 493h1v1h-1zM779 494h1v1h-1zM779 495h1v1h-1zM780 496h1v1h-1zM780 497h1v1h-1zM781 498h1v1h-1zM781 499h1v1h-1zM781 500h1v1h-1zM782 501h1v1h-1zM782 502h1v1h-1zM783 503h1v1h-1zM783 504h1v1h-1zM783 505h1v1h-1zM784 506h1v1h-1zM784 507h1v1h-1zM785 508h1v1h-1zM785 509h1v1h-1zM786 510h1v1h-1zM786 511h1v1h-1zM786 512h1v1h-1zM787 513h1v1h-1zM787 514h1v1h-1zM788 515h1v1h-1zM788 516h1v1h-1zM788 517h1v1h-1zM789 518h1v1h-1zM789 519h1v1h-1zM790 520h1v1h-1zM790 521h1v1h-1zM790 522h1v1h-1z"/><path fill="#9c3a64" d="M698 298h1v1h-1zM697 298h1v1h-1zM698 300h1v1h-1zM697 300h1v1h-1zM699 302h1v1h-1zM698 302h1v1h-1zM700 304h1v1h-1zM699 304h1v1h-1zM701 306h1v1h-1zM700 306h1v1h-1zM702 308h1v1h-1zM701 308h1v1h-1zM703 310h1v1h-1zM702 310h1v1h-1zM703 312h1v1h-1zM702 312h1v1h-1zM704 314h1v1h-1zM703 314h1v1h-1zM705 316h1v1h-1zM704 316h1v1h-1zM706 318h1v1h-1zM705 318h1v1h-1zM707 320h1v1h-1zM706 320h1v1h-1zM708 322h1v1h-1zM707 322h1v1h-1zM708 324h1v1h-1zM707 324h1v1h-1zM709 326h1v1h-1zM708 326h1v1h-1zM710 328h1v1h-1zM709 328h1v1h-1zM711 330h1v1h-1zM710 330h1v1h-1zM712 332h1v1h-1zM711 332h1v1h-1zM712 334h1v1h-1zM711 334h1v1h-1zM713 336h1v1h-1zM712 336h1v1h-1zM714 338h1v1h-1zM713 338h1v1h-1zM715 340h1v1h-1zM714 340h1v1h-1zM716 342h1v1h-1zM715 342h1v1h-1zM717 344h1v1h-1zM716 344h1v1h-1zM717 346h1v1h-1zM716 346h1v1h-1zM718 348h1v1h-1zM717 348h1v1h-1zM719 350h1v1h-1zM718 350h1v1h-1zM720 352h1v1h-1zM719 352h1v1h-1zM721 354h1v1h-1zM720 354h1v1h-1zM721 356h1v1h-1zM720 356h1v1h-1zM722 358h1v1h-1zM721 358h1v1h-1zM723 360h1v1h-1zM722 360h1v1h-1zM724 362h1v1h-1zM723 362h1v1h-1zM725 364h1v1h-1zM724 364h1v1h-1zM726 366h1v1h-1zM725 366h1v1h-1zM726 368h1v1h-1zM725 368h1v1h-1zM727 370h1v1h-1zM726 370h1v1h-1zM728 372h1v1h-1zM727 372h1v1h-1zM729 374h1v1h-1zM728 374h1v1h-1zM730 376h1v1h-1zM729 376h1v1h-1zM730 378h1v1h-1zM729 378h1v1h-1zM731 380h1v1h-1zM730 380h1v1h-1zM732 382h1v1h-1zM731 382h1v1h-1zM733 384h1v1h-1zM732 384h1v1h-1zM734 386h1v1h-1zM733 386h1v1h-1zM735 388h1v1h-1zM734 388h1v1h-1zM735 390h1v1h-1zM734 390h1v1h-1zM736 392h1v1h-1zM735 392h1v1h-1zM737 394h1v1h-1zM736 394h1v1h-1zM738 396h1v1h-1zM737 396h1v1h-1zM739 398h1v1h-1zM738 398h1v1h-1zM739 400h1v1h-1zM738 400h1v1h-1zM740 402h1v1h-1zM739 402h1v1h-1zM741 404h1v1h-1zM740 404h1v1h-1zM742 406h1v1h-1zM741 406h1v1h-1zM743 408h1v1h-1zM742 408h1v1h-1zM744 410h1v1h-1zM743 410h1v1h-1zM744 412h1v1h-1zM743 412h1v1h-1zM745 414h1v1h-1zM744 414h1v1h-1zM746 416h1v1h-1zM745 416h1v1h-1zM747 418h1v1h-1zM746 418h1v1h-1zM748 420h1v1h-1zM747 420h1v1h-1zM748 422h1v1h-1zM747 422h1v1h-1zM749 424h1v1h-1zM748 424h1v1h-1zM750 426h1v1h-1zM749 426h1v1h-1zM751 428h1v1h-1zM750 428h1v1h-1zM752 430h1v1h-1zM751 430h1v1h-1zM753 432h1v1h-1zM752 432h1v1h-1zM753 434h1v1h-1zM752 434h1v1h-1zM754 436h1v1h-1zM753 436h1v1h-1zM755 438h1v1h-1zM754 438h1v1h-1zM756 440h1v1h-1zM755 440h1v1h-1zM757 442h1v1h-1zM756 442h1v1h-1zM757 444h1v1h-1zM756 444h1v1h-1zM758 446h1v1h-1zM757 446h1v1h-1zM759 448h1v1h-1zM758 448h1v1h-1zM760 450h1v1h-1zM759 450h1v1h-1zM761 452h1v1h-1zM760 452h1v1h-1zM762 454h1v1h-1zM761 454h1v1h-1zM762 456h1v1h-1zM761 456h1v1h-1zM763 458h1v1h-1zM762 458h1v1h-1zM764 460h1v1h-1zM763 460h1v1h-1zM765 462h1v1h-1zM764 462h1v1h-1zM766 464h1v1h-1zM765 464h1v1h-1zM767 466h1v1h-1zM766 466h1v1h-1zM767 468h1v1h-1zM766 468h1v1h-1zM768 470h1v1h-1zM767 470h1v1h-1zM769 472h1v1h-1zM768 472h1v1h-1zM770 474h1v1h-1zM769 474h1v1h-1zM771 476h1v1h-1zM770 476h1v1h-1zM771 478h1v1h-1zM770 478h1v1h-1zM772 480h1v1h-1zM771 480h1v1h-1zM773 482h1v1h-1zM772 482h1v1h-1zM774 484h1v1h-1zM773 484h1v1h-1zM775 486h1v1h-1zM774 486h1v1h-1zM776 488h1v1h-1zM775 488h1v1h-1zM776 490h1v1h-1zM775 490h1v1h-1zM777 492h1v1h-1zM776 492h1v1h-1zM778 494h1v1h-1zM777 494h1v1h-1zM779 496h1v1h-1zM778 496h1v1h-1zM780 498h1v1h-1zM779 498h1v1h-1zM780 500h1v1h-1zM779 500h1v1h-1zM781 502h1v1h-1zM780 502h1v1h-1zM782 504h1v1h-1zM781 504h1v1h-1zM783 506h1v1h-1zM782 506h1v1h-1zM784 508h1v1h-1zM783 508h1v1h-1zM785 510h1v1h-1zM784 510h1v1h-1zM785 512h1v1h-1zM784 512h1v1h-1zM786 514h1v1h-1zM785 514h1v1h-1zM787 516h1v1h-1zM786 516h1v1h-1zM788 518h1v1h-1zM787 518h1v1h-1zM789 520h1v1h-1zM788 520h1v1h-1zM789 522h1v1h-1zM788 522h1v1h-1z"/><path fill="#a8506c" d="M698 299h1v1h-1zM699 301h1v1h-1zM697 301h1v1h-1zM700 303h1v1h-1zM701 305h1v1h-1zM699 305h1v1h-1zM701 307h1v1h-1zM702 309h1v1h-1zM700 309h1v1h-1zM703 311h1v1h-1zM704 313h1v1h-1zM702 313h1v1h-1zM705 315h1v1h-1zM705 317h1v1h-1zM703 317h1v1h-1zM706 319h1v1h-1zM707 321h1v1h-1zM705 321h1v1h-1zM708 323h1v1h-1zM709 325h1v1h-1zM707 325h1v1h-1zM710 327h1v1h-1zM710 329h1v1h-1zM708 329h1v1h-1zM711 331h1v1h-1zM712 333h1v1h-1zM710 333h1v1h-1zM713 335h1v1h-1zM714 337h1v1h-1zM712 337h1v1h-1zM714 339h1v1h-1zM715 341h1v1h-1zM713 341h1v1h-1zM716 343h1v1h-1zM717 345h1v1h-1zM715 345h1v1h-1zM718 347h1v1h-1zM719 349h1v1h-1zM717 349h1v1h-1zM719 351h1v1h-1zM720 353h1v1h-1zM718 353h1v1h-1zM721 355h1v1h-1zM722 357h1v1h-1zM720 357h1v1h-1zM723 359h1v1h-1zM723 361h1v1h-1zM721 361h1v1h-1zM724 363h1v1h-1zM725 365h1v1h-1zM723 365h1v1h-1zM726 367h1v1h-1zM727 369h1v1h-1zM725 369h1v1h-1zM728 371h1v1h-1zM728 373h1v1h-1zM726 373h1v1h-1zM729 375h1v1h-1zM730 377h1v1h-1zM728 377h1v1h-1zM731 379h1v1h-1zM732 381h1v1h-1zM730 381h1v1h-1zM732 383h1v1h-1zM733 385h1v1h-1zM731 385h1v1h-1zM734 387h1v1h-1zM735 389h1v1h-1zM733 389h1v1h-1zM736 391h1v1h-1zM737 393h1v1h-1zM735 393h1v1h-1zM737 395h1v1h-1zM738 397h1v1h-1zM736 397h1v1h-1zM739 399h1v1h-1zM740 401h1v1h-1zM738 401h1v1h-1zM741 403h1v1h-1zM742 405h1v1h-1zM740 405h1v1h-1zM742 407h1v1h-1zM743 409h1v1h-1zM741 409h1v1h-1zM744 411h1v1h-1zM745 413h1v1h-1zM743 413h1v1h-1zM746 415h1v1h-1zM746 417h1v1h-1zM744 417h1v1h-1zM747 419h1v1h-1zM748 421h1v1h-1zM746 421h1v1h-1zM749 423h1v1h-1zM750 425h1v1h-1zM748 425h1v1h-1zM751 427h1v1h-1zM751 429h1v1h-1zM749 429h1v1h-1zM752 431h1v1h-1zM753 433h1v1h-1zM751 433h1v1h-1zM754 435h1v1h-1zM755 437h1v1h-1zM753 437h1v1h-1zM755 439h1v1h-1zM756 441h1v1h-1zM754 441h1v1h-1zM757 443h1v1h-1zM758 445h1v1h-1zM756 445h1v1h-1zM759 447h1v1h-1zM760 449h1v1h-1zM758 449h1v1h-1zM760 451h1v1h-1zM761 453h1v1h-1zM759 453h1v1h-1zM762 455h1v1h-1zM763 457h1v1h-1zM761 457h1v1h-1zM764 459h1v1h-1zM764 461h1v1h-1zM762 461h1v1h-1zM765 463h1v1h-1zM766 465h1v1h-1zM764 465h1v1h-1zM767 467h1v1h-1zM768 469h1v1h-1zM766 469h1v1h-1zM769 471h1v1h-1zM769 473h1v1h-1zM767 473h1v1h-1zM770 475h1v1h-1zM771 477h1v1h-1zM769 477h1v1h-1zM772 479h1v1h-1zM773 481h1v1h-1zM771 481h1v1h-1zM773 483h1v1h-1zM774 485h1v1h-1zM772 485h1v1h-1zM775 487h1v1h-1zM776 489h1v1h-1zM774 489h1v1h-1zM777 491h1v1h-1zM778 493h1v1h-1zM776 493h1v1h-1zM778 495h1v1h-1zM779 497h1v1h-1zM777 497h1v1h-1zM780 499h1v1h-1zM781 501h1v1h-1zM779 501h1v1h-1zM782 503h1v1h-1zM782 505h1v1h-1zM780 505h1v1h-1zM783 507h1v1h-1zM784 509h1v1h-1zM782 509h1v1h-1zM785 511h1v1h-1zM786 513h1v1h-1zM784 513h1v1h-1zM787 515h1v1h-1zM787 517h1v1h-1zM785 517h1v1h-1zM788 519h1v1h-1zM789 521h1v1h-1zM787 521h1v1h-1z"/></g>
<rect x="371.8" y="296.1" width="3" height="3" fill="#5a0f3c"/>
<rect x="260.1" y="520.5" width="3" height="3" fill="#5a0f3c"/>
<rect x="696.7" y="296.1" width="3" height="3" fill="#5a0f3c"/>
<rect x="789.1" y="521.1" width="3" height="3" fill="#5a0f3c"/>
<rect x="240.9" y="296.3" width="2.4" height="2.4" fill="#3b3f44"/>
<rect x="503.90000000000003" y="296.2" width="2.4" height="2.4" fill="#3b3f44"/>
<rect x="473.5" y="520.9" width="2.4" height="2.4" fill="#3b3f44"/>
<rect x="47.8" y="521.0" width="2.4" height="2.4" fill="#3b3f44"/>
<rect x="565.9" y="296.2" width="2.4" height="2.4" fill="#3b3f44"/>
<rect x="829.1999999999999" y="296.2" width="2.4" height="2.4" fill="#3b3f44"/>
<rect x="1002.3" y="521.8" width="2.4" height="2.4" fill="#3b3f44"/>
<rect x="575.5" y="521.0" width="2.4" height="2.4" fill="#3b3f44"/>
<rect x="47.2" y="520.8" width="2.8" height="2.9" fill="#808080"/>
<rect x="325.1" y="377.8" width="12.3" height="6.3" fill="#8ad6fb"/><path d="M327.0 384.2 A5.5 4.3 0 0 1 338.0 384.2 Z" fill="#f07a30"/><ellipse cx="332.3" cy="382.6" rx="2.9" ry="1.3" fill="#0a0a0a" transform="rotate(-18 332.5 383.0)"/>
<rect x="728.0" y="378.0" width="12.3" height="6.3" fill="#8ad6fb"/><path d="M729.9 384.4 A5.5 4.3 0 0 1 740.9 384.4 Z" fill="#f07a30"/><ellipse cx="735.1999999999999" cy="382.8" rx="2.9" ry="1.3" fill="#0a0a0a" transform="rotate(-18 735.4 383.2)"/>
<g fill="#ffffff" stroke="#3c3c3c" stroke-width="1.2" paint-order="stroke"><circle cx="462.6" cy="576.2" r="3.4"/><circle cx="467.8" cy="573.2" r="3.6"/><rect x="462.4" y="575" width="11" height="6.3" rx="0.8"/><path d="M473 577.2 L476.6 575.4 V580.6 L473 578.9 Z"/></g>
<g fill="#ffffff"><circle cx="462.6" cy="576.2" r="3.4"/><circle cx="467.8" cy="573.2" r="3.6"/><rect x="462.4" y="575" width="11" height="6.3" rx="0.8"/><path d="M473 577.2 L476.6 575.4 V580.6 L473 578.9 Z"/></g>
</svg>

<!-- tab bar -->
<div id="tabbar"><div class="top"></div>
 <div id="scenetab"><div class="bl"></div></div>
 <svg class="abs" style="left:8px;top:5px" width="12" height="12" viewBox="0 0 12 12"><path d="M3.6 0.6 V11.2 M7.9 0.6 V11.2 M0.6 3.7 H11.2 M0.6 8 H11.2" stroke="#4a4a4a" stroke-width="1.1" fill="none"/></svg>
 <span class="tabtxt" style="left:25.5px">Scene</span>
 <svg class="abs" style="left:85.5px;top:7.5px" width="15" height="8" viewBox="0 0 15 8"><rect x="0.2" y="0.3" width="14.4" height="7.3" rx="3.6" fill="#4f4f4f"/><path d="M2.6 3.9 H6 M4.3 2.2 V5.6" stroke="#b0b0b0" stroke-width="1"/><circle cx="10" cy="4.8" r="0.8" fill="#b0b0b0"/><circle cx="11.8" cy="3" r="0.8" fill="#b0b0b0"/></svg>
 <span class="tabtxt" style="left:103.4px">Game</span>
 <svg class="abs" style="left:1087.5px;top:5px" width="3" height="10" viewBox="0 0 3 10"><rect x="0.3" y="0.3" width="2.2" height="2" fill="#3c3c3c"/><rect x="0.3" y="3.9" width="2.2" height="2" fill="#3c3c3c"/><rect x="0.3" y="7.5" width="2.2" height="2" fill="#3c3c3c"/></svg>
</div>

<!-- toolbar -->
<div id="toolbar">
 <div class="hd" style="left:7.2px"></div><div class="hd" style="left:10px"></div>
 <div class="btn" style="left:17px;width:65px">
  <svg class="abs" style="left:3.5px;top:2.5px" width="16" height="16" viewBox="0 0 16 16"><rect x="1.7" y="1.2" width="12.3" height="12.3" rx="0.8" fill="none" stroke="#4a4a4a" stroke-width="1"/><path d="M5 11 L13.2 2.2" stroke="#4a4a4a" stroke-width="1"/><circle cx="3.6" cy="12.2" r="2.2" fill="#e4e4e4" stroke="#cc1f2d" stroke-width="1.1"/></svg>
  <span class="t" style="left:19.4px">Pivot</span><svg style="position:absolute;left:51.4px;top:7.5px" width="9" height="5" viewBox="0 0 9 5"><path d="M0.3 0.2 H8.7 L4.5 4.9 Z" fill="#4a4a40"/></svg>
 </div>
 <div class="btn" style="left:86px;width:67px">
  <svg class="abs" style="left:3.5px;top:2.5px" width="17" height="16" viewBox="0 0 17 16"><path d="M7.3 1 L13.6 3.6 V10.6 L7.3 14 L1 10.6 V3.6 Z M1 3.6 L7.3 6.6 L13.6 3.6 M7.3 6.6 V14" fill="none" stroke="#4a4a4a" stroke-width="1" stroke-linejoin="round"/><circle cx="11.5" cy="12.2" r="2.3" fill="#e4e4e4" stroke="#cc1f2d" stroke-width="1.1"/></svg>
  <span class="t" style="left:19.8px">Local</span><svg style="position:absolute;left:54px;top:7.5px" width="9" height="5" viewBox="0 0 9 5"><path d="M0.3 0.2 H8.7 L4.5 4.9 Z" fill="#4a4a40"/></svg>
 </div>
 <div class="hd" style="left:162.8px"></div><div class="hd" style="left:165.7px"></div>
 <div class="btn blue l" style="left:173.2px;width:21.5px">
  <svg class="abs" style="left:3.6px;top:3px" width="15" height="15" viewBox="0 0 15 15"><path d="M3.2 0.5 V12.8 M7.4 0.5 V7 M0.4 3.2 H12 M0.4 7.4 H7.4 M0.4 11 H5.5 M10.8 0.5 V4.4" stroke="#fff" stroke-width="1.1" fill="none"/><path d="M7.6 7 L10.3 10.4 L13 7 M10.3 10.4 V13.6" stroke="#fff" stroke-width="1.3" fill="none"/></svg>
 </div>
 <div class="btn blue r" style="left:196.1px;width:13.8px"><svg style="position:absolute;left:2.4px;top:7.5px" width="9" height="5" viewBox="0 0 9 5"><path d="M0.3 0.2 H8.7 L4.5 4.9 Z" fill="#3e3e3e"/></svg></div>
 <div class="btn dis l" style="left:214.3px;width:22.3px">
  <svg class="abs" style="left:3.6px;top:3px" width="16" height="15" viewBox="0 0 16 15"><path d="M3.2 0.5 V11 M7.4 0.5 V5.6 M11.2 0.5 V5 M0.4 3.2 H12.6 M0.4 7.2 H5.4" stroke="#7a7a7a" stroke-width="1" stroke-dasharray="1.6 0.8" fill="none"/><rect x="5.6" y="6.6" width="1.8" height="1.8" fill="#6a6a6a"/><rect x="5.6" y="11.2" width="1.8" height="1.8" fill="#6a6a6a"/><path d="M8 7.4 H10.8 A2.5 2.5 0 0 1 10.8 12.4 H8" fill="none" stroke="#d05058" stroke-width="1.7"/></svg>
 </div>
 <div class="btn dis r" style="left:237.4px;width:13.6px"><svg style="position:absolute;left:2.3px;top:7.5px" width="9" height="5" viewBox="0 0 9 5"><path d="M0.3 0.2 H8.7 L4.5 4.9 Z" fill="#9a9a9a"/></svg></div>
 <div class="btn" style="left:255px;width:35.8px">
  <svg class="abs" style="left:3.8px;top:2.6px" width="14" height="15" viewBox="0 0 14 15"><path d="M0.8 0.4 V13 M12.8 0.4 V13 M0.8 6.7 H12.8 M3.2 3.2 V10.2 M5.6 1.6 V11.6 M8 3.2 V10.2 M10.4 1.6 V11.6" stroke="#3c3c3c" stroke-width="1" fill="none"/></svg>
  <svg style="position:absolute;left:21.6px;top:7.5px" width="9" height="5" viewBox="0 0 9 5"><path d="M0.3 0.2 H8.7 L4.5 4.9 Z" fill="#4a4a40"/></svg>
 </div>

 <div class="hd lt" style="left:729.4px"></div><div class="hd lt" style="left:732px"></div>
 <div class="btn" style="left:739.2px;width:36.6px">
  <svg class="abs" style="left:3.2px;top:2px" width="16" height="16" viewBox="0 0 16 16"><circle cx="7.8" cy="8" r="6.4" fill="none" stroke="#4a4a4a" stroke-width="1.1"/><path d="M11.4 4.2 L9.2 9.4 L6.6 6.8 Z" fill="#4a4a4a"/><path d="M4.2 11.6 L6.6 6.8 L9.2 9.4 Z" fill="none" stroke="#4a4a4a" stroke-width="0.9"/></svg>
  <svg style="position:absolute;left:22.6px;top:7.5px" width="9" height="5" viewBox="0 0 9 5"><path d="M0.3 0.2 H8.7 L4.5 4.9 Z" fill="#4a4a40"/></svg>
 </div>
 <div class="hd" style="left:785.8px"></div><div class="hd" style="left:788.8px"></div>
 <div class="btn" style="left:795.8px;width:36.1px">
  <svg class="abs" style="left:3.2px;top:2px" width="16" height="16" viewBox="0 0 16 16"><circle cx="7.8" cy="8" r="6.9" fill="#4a4a4a"/><circle cx="6.9" cy="7.1" r="5.1" fill="#e4e4e4"/></svg>
  <svg style="position:absolute;left:22.2px;top:7.5px" width="9" height="5" viewBox="0 0 9 5"><path d="M0.3 0.2 H8.7 L4.5 4.9 Z" fill="#4a4a40"/></svg>
 </div>
 <div class="btn" style="left:836px;width:32.1px"><span class="t" style="left:9.6px;top:3.6px;font-size:10.4px;font-weight:bold;color:#4e4e4e;letter-spacing:0.2px">2D</span></div>
 <div class="btn blue" style="left:872px;width:32px">
  <svg class="abs" style="left:11.4px;top:3.6px" width="9" height="13" viewBox="0 0 9 13"><path d="M4.4 0.3 A3.9 3.9 0 0 1 6.6 7.4 V9 H2.2 V7.4 A3.9 3.9 0 0 1 4.4 0.3 Z" fill="#fff"/><path d="M2.6 10.2 H6.2 L5.4 11.8 H3.4 Z" fill="#fff"/></svg>
 </div>
 <div class="btn" style="left:907.8px;width:32.2px">
  <svg class="abs" style="left:10px;top:4.4px" width="14" height="12" viewBox="0 0 14 12"><path d="M0.6 3 H2.6 V8 H0.6 Z M3.6 2.6 L6.8 0.4 V10.6 L3.6 8.4 Z" fill="#4a4a4a"/><path d="M7.6 6.6 L11.4 10.6 M11.4 6.6 L7.6 10.6" stroke="#4a4a4a" stroke-width="1.1"/></svg>
 </div>
 <div class="btn l" style="left:944.2px;width:21.7px">
  <svg class="abs" style="left:4px;top:3.2px" width="15" height="14" viewBox="0 0 15 14"><path d="M1 8.2 L6 5.6 L11.4 8.2 L6 10.8 Z" fill="#4a4a4a"/><path d="M1 10.6 L6 13.2 L11.4 10.6" fill="none" stroke="#4a4a4a" stroke-width="1.1"/><path d="M10 0.4 L11 3 L13.8 4 L11 5 L10 7.6 L9 5 L6.2 4 L9 3 Z" fill="#4a4a4a"/></svg>
 </div>
 <div class="btn r" style="left:966.7px;width:14.3px"><svg style="position:absolute;left:2.6px;top:7.5px" width="9" height="5" viewBox="0 0 9 5"><path d="M0.3 0.2 H8.7 L4.5 4.9 Z" fill="#4a4a40"/></svg></div>
 <div class="btn blue" style="left:985px;width:31.9px">
  <svg class="abs" style="left:8.6px;top:4px" width="15" height="12" viewBox="0 0 15 12"><path d="M0.8 6.2 Q7 -0.6 13.4 6.2 Q7 12.6 0.8 6.2 Z" fill="none" stroke="#fff" stroke-width="1.1"/><path d="M3 11.2 L11.6 0.6" stroke="#fff" stroke-width="1.2"/></svg>
 </div>
 <div class="btn" style="left:1020.9px;width:36.1px">
  <svg class="abs" style="left:4.6px;top:5px" width="14" height="10" viewBox="0 0 14 10"><rect x="0.4" y="0.6" width="8" height="8.8" rx="1" fill="#4a4a4a"/><path d="M9.2 3.6 L11.6 1.4 V8.6 L9.2 6.4 Z" fill="#4a4a4a"/></svg>
  <svg style="position:absolute;left:22.2px;top:7.5px" width="9" height="5" viewBox="0 0 9 5"><path d="M0.3 0.2 H8.7 L4.5 4.9 Z" fill="#4a4a40"/></svg>
 </div>
 <div class="btn blue l" style="left:1061px;width:21.8px">
  <svg class="abs" style="left:3.2px;top:2.2px" width="16" height="16" viewBox="0 0 16 16"><circle cx="8" cy="8.2" r="6.2" fill="none" stroke="#fff" stroke-width="1.2"/><ellipse cx="8" cy="8.2" rx="6.2" ry="2.6" fill="none" stroke="#fff" stroke-width="1" transform="rotate(-25 8 8.2)"/><path d="M8 2 Q4.6 8.2 8.6 14.4" fill="none" stroke="#fff" stroke-width="1"/><circle cx="8" cy="2" r="1.5" fill="#fff"/><circle cx="2.4" cy="10.6" r="1.5" fill="#fff"/><circle cx="13.6" cy="6" r="1.5" fill="#fff"/></svg>
 </div>
 <div class="btn blue r" style="left:1083.6px;width:14.3px"><svg style="position:absolute;left:2.6px;top:7.5px" width="9" height="5" viewBox="0 0 9 5"><path d="M0.3 0.2 H8.7 L4.5 4.9 Z" fill="#3e3e3e"/></svg></div>
</div>
<div id="tbline"></div>
<div id="lb"></div><div id="rb"></div><div id="bb"></div>

<!-- tools overlay -->
<div id="tools">
 <div class="abs" style="left:11px;top:6.2px;width:16px;height:1px;background:#505050"></div>
 <div class="abs" style="left:11px;top:9px;width:16px;height:1px;background:#505050"></div>
 <div class="tb" style="top:18px;border-radius:3px 3px 0 0">
  <svg class="abs" style="left:8.5px;top:2px" width="15" height="16" viewBox="0 0 15 16"><path d="M3.4 8.6 L2.6 3.4 Q3.4 2.4 4.2 3.4 L5.2 7 L5.4 1.6 Q6.4 0.6 7.2 1.6 L7.6 6.8 L8.6 1.8 Q9.6 1 10.2 2.2 L9.8 7.4 L11.6 4 Q12.6 3.4 13 4.6 L11.2 10.4 Q10.4 14.4 7.4 14.6 Q4.6 14.6 3 12 L0.6 8 Q0.8 6.6 2.2 7.2 Z" fill="#454545"/></svg>
 </div>
 <div class="tb" style="top:39px;background:#8ab4f0">
  <svg class="abs" style="left:8px;top:2px" width="16" height="16" viewBox="0 0 16 16"><path d="M8 1.6 V6.2 M8 9.8 V14.4 M1.6 8 H6.2 M9.8 8 H14.4" stroke="#dce9fc" stroke-width="1.2" fill="none"/><path d="M5.8 3.4 L8 1 L10.2 3.4 M5.8 12.6 L8 15 L10.2 12.6 M3.4 5.8 L1 8 L3.4 10.2 M12.6 5.8 L15 8 L12.6 10.2" fill="none" stroke="#e6f0fd" stroke-width="1.2"/></svg>
 </div>
 <div class="tb" style="top:60px">
  <svg class="abs" style="left:8px;top:2px" width="16" height="16" viewBox="0 0 16 16"><path d="M6.4 1.6 A6.4 6.4 0 0 0 4 13 M9.6 14.4 A6.4 6.4 0 0 0 12 3" fill="none" stroke="#454545" stroke-width="1.1"/><path d="M9 2.6 H12.4 V6 M7 13.4 H3.6 V10" fill="none" stroke="#454545" stroke-width="1.1"/></svg>
 </div>
 <div class="tb" style="top:81px">
  <svg class="abs" style="left:8.5px;top:2.5px" width="15" height="15" viewBox="0 0 15 15"><rect x="1" y="1" width="13" height="13" fill="none" stroke="#454545" stroke-width="1.1"/><rect x="1" y="9" width="5" height="5" fill="none" stroke="#454545" stroke-width="1.1"/><path d="M6.4 8.6 L11.4 3.6 M7.8 3.4 H11.6 V7.2" fill="none" stroke="#454545" stroke-width="1.1"/></svg>
 </div>
 <div class="tb" style="top:102px">
  <svg class="abs" style="left:8.5px;top:2.5px" width="15" height="15" viewBox="0 0 15 15"><path d="M4.6 2 H10.4 M4.6 13 H10.4 M2 4.6 V10.4 M13 4.6 V10.4" fill="none" stroke="#454545" stroke-width="1"/><rect x="0.6" y="0.6" width="2.8" height="2.8" fill="#454545"/><rect x="11.6" y="0.6" width="2.8" height="2.8" fill="#454545"/><rect x="0.6" y="11.6" width="2.8" height="2.8" fill="#454545"/><rect x="11.6" y="11.6" width="2.8" height="2.8" fill="#454545"/></svg>
 </div>
 <div class="tb" style="top:123px;height:19.6px;border-radius:0 0 3px 3px">
  <svg class="abs" style="left:8px;top:2px" width="16" height="16" viewBox="0 0 16 16"><circle cx="8" cy="8" r="6.6" fill="none" stroke="#5a5a5a" stroke-width="1" stroke-dasharray="2.2 1.2"/><circle cx="8" cy="8" r="4.6" fill="none" stroke="#6a6a6a" stroke-width="0.8"/><path d="M8 3 V13 M3 8 H13" stroke="#454545" stroke-width="1"/><path d="M6.6 4.4 L8 3 L9.4 4.4 M6.6 11.6 L8 13 L9.4 11.6 M4.4 6.6 L3 8 L4.4 9.4 M11.6 6.6 L13 8 L11.6 9.4" fill="none" stroke="#454545" stroke-width="1"/><path d="M0.4 15.6 L0.4 13.2 L2.8 15.6 Z M15.6 0.4 V2.8 L13.2 0.4 Z" fill="#454545"/></svg>
 </div>
</div>

<!-- gizmo -->
<svg class="abs" style="left:1010px;top:52px;will-change:transform" width="82" height="80" viewBox="1010 52 82 80">
 <defs>
  <linearGradient id="gw" x1="0" x2="1"><stop offset="0" stop-color="#f2f2f2"/><stop offset="0.5" stop-color="#e2e2e2"/><stop offset="1" stop-color="#a8a8a8"/></linearGradient>
  <linearGradient id="gg" x1="0" x2="1"><stop offset="0" stop-color="#7fd63c"/><stop offset="0.6" stop-color="#4ea024"/><stop offset="1" stop-color="#3d8a1c"/></linearGradient>
  <linearGradient id="gr" x1="0" y1="0" x2="0" y2="1"><stop offset="0" stop-color="#f0553a"/><stop offset="1" stop-color="#d23a22"/></linearGradient>
  <linearGradient id="gd" x1="0" x2="1"><stop offset="0" stop-color="#8a9096"/><stop offset="1" stop-color="#5c6268"/></linearGradient>
 </defs>
 <text x="1042.4" y="64.4" font-family="Liberation Sans, sans-serif" font-size="10.5" font-weight="bold" fill="#f4f4f4">y</text>
 <ellipse cx="1046.9" cy="87.4" rx="5" ry="4.2" fill="none" stroke="#3c6ede" stroke-width="1.8"/>
 <path d="M1039 71.4 L1046.9 90.2 L1054.8 71.4 Z" fill="url(#gg)"/>
 <ellipse cx="1046.9" cy="71.4" rx="7.9" ry="2.5" fill="#86de44"/>
 <rect x="1039.8" y="89.6" width="14" height="17" fill="#c9c9c9"/>
 <rect x="1039.8" y="89.6" width="14" height="6.4" fill="#bcbcc2"/>
 <path d="M1038.4 98 L1020.4 92.2 Q1017.6 93 1017.8 98 Q1017.6 103 1020.4 103.8 Z" fill="url(#gw)"/>
 <path d="M1055.6 98 L1074.6 92.6 Q1076.4 98 1074.6 103.4 Z" fill="url(#gr)"/>
 <path d="M1046.9 103.6 L1039.6 119.6 H1054.2 Z" fill="url(#gd)"/>
 <ellipse cx="1046.8" cy="120.8" rx="8.9" ry="4.9" fill="#d2d2d2"/>
 <text x="1076" y="101.2" font-family="Liberation Sans, sans-serif" font-size="10.5" font-weight="bold" fill="#f4f4f4">x</text>
 <g fill="none" stroke="#c4c4c4" stroke-width="1.1"><path d="M1077.2 66.4 V64.6 A2 2 0 0 1 1081.2 64.6 V65.2"/></g>
 <rect x="1075.8" y="66.2" width="6.8" height="4.6" rx="0.6" fill="#c4c4c4"/>
</svg>
<svg class="abs" style="left:1021px;top:143px" width="12" height="11" viewBox="0 0 12 11"><path d="M11 0.8 L1.2 5.4 L11 10 M1.2 5.4 H11" fill="none" stroke="#c4c4c4" stroke-width="0.9"/></svg>
<div id="persp">Persp</div>

<!-- tooltip -->
<div id="tip"><span>AI Navigation</span></div>
<!-- cursor -->
<svg class="abs" style="left:747px;top:40px" width="16" height="23" viewBox="0 0 16 23"><path d="M2.6 2.2 V17.4 L6.2 14 L8.8 20.2 L11.6 19 L9 13 H13.8 Z" fill="#fff" stroke="#111" stroke-width="1.1" stroke-linejoin="round"/></svg>
</body></html>
